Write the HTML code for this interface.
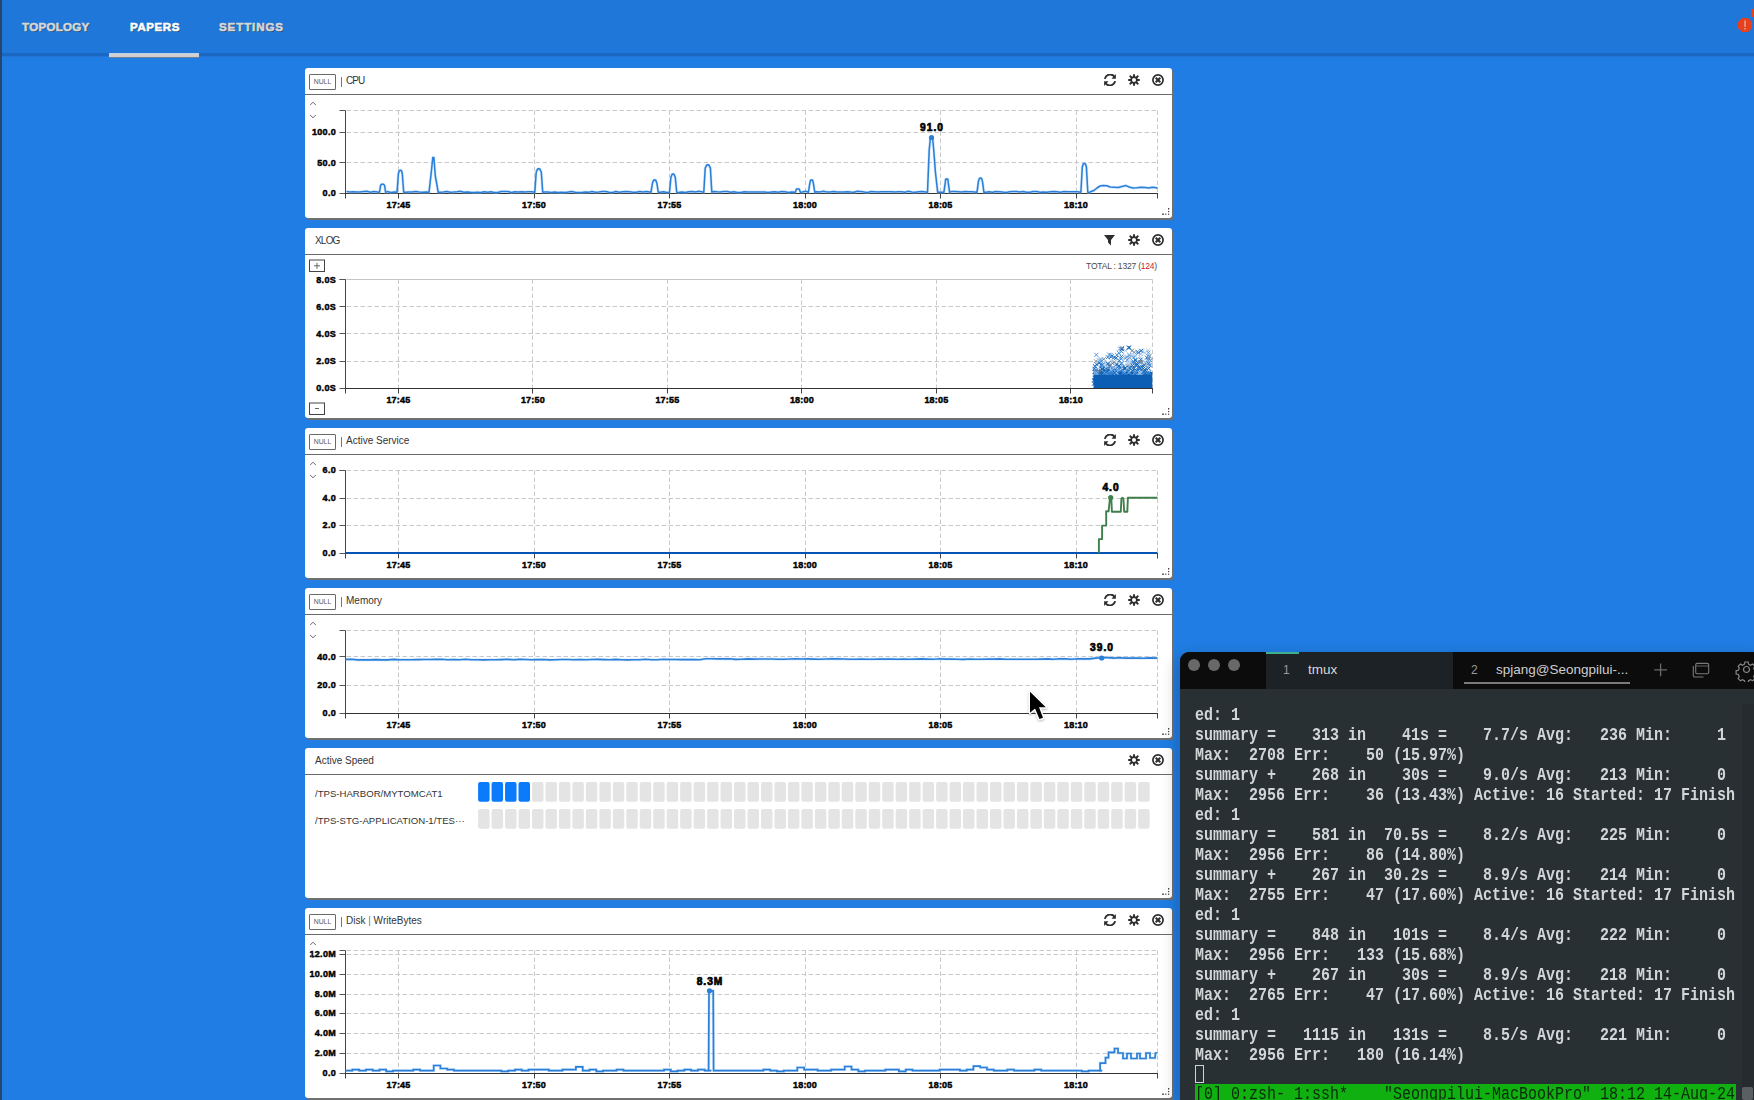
<!DOCTYPE html><html><head><meta charset="utf-8"><style>
*{margin:0;padding:0;box-sizing:border-box}
html,body{width:1754px;height:1100px;overflow:hidden;background:#207de3;font-family:"Liberation Sans",sans-serif}
#strip{position:absolute;left:0;top:0;width:2px;height:1100px;background:#26466d}
#hdr{position:absolute;left:2px;top:0;width:1752px;height:53px;background:#1e77d9}
#hdrline{position:absolute;left:2px;top:53px;width:1752px;height:4px;background:linear-gradient(#1a68c2 0,#1a68c2 75%,#2474d8 75%)}
.tab{position:absolute;top:20px;font-weight:bold;font-size:11.5px;line-height:14px;color:#d6d6d6;-webkit-text-stroke:0.6px #d6d6d6;text-shadow:1px 1px 0 rgba(40,40,40,.6)}
#tabul{position:absolute;left:109px;top:53px;width:90px;height:5px;background:linear-gradient(#bccfe4 0,#bccfe4 20%,#d2d2d2 20%,#cdcdcd 80%,#6f8196 80%)}
.panel{position:absolute;left:305px;width:867px;background:#fff;border-radius:3px;box-shadow:2px 2px 0 #707070}
.ph{position:absolute;left:0;top:0;width:100%;height:27px;border-bottom:1px solid #6b6b6b}
.null{position:absolute;left:4px;top:6px;width:27px;height:16px;border:1px solid #6a6a6a;border-radius:1px;font-size:6.8px;color:#555;text-align:center;line-height:14px}
.pt{position:absolute;left:41px;top:6.5px;font-size:10px;line-height:11px;color:#333;white-space:pre;letter-spacing:0px}
.bar{position:absolute;left:36px;top:9px;width:1px;height:9.5px;background:#777}
.pt2{position:absolute;left:10px;top:6.5px;font-size:10px;line-height:11px;color:#333;white-space:pre;letter-spacing:0px}
#term{position:absolute;left:1180px;top:652px;width:574px;height:448px;background:#293034;border-top-left-radius:9px;overflow:hidden}
#tshadow{position:absolute;left:1180px;top:660px;width:574px;height:440px;border-top-left-radius:9px;box-shadow:0 0 16px 4px rgba(0,0,0,0.2)}
#tbar{position:absolute;left:0;top:0;width:100%;height:37px;background:#0c0c0c}
.tl{position:absolute;top:7px;width:12px;height:12px;border-radius:6px;background:#686868}
#tab1{position:absolute;left:86px;top:0;width:187px;height:37px;background:#1d2226}
#tab1g{position:absolute;left:86px;top:0;width:33px;height:2px;background:#3fae8a}
.tt{position:absolute;font-family:"Liberation Sans",sans-serif;font-size:13.5px;color:#d8d8d8;white-space:pre}
.tn{position:absolute;font-family:"Liberation Sans",sans-serif;font-size:12px;color:#9a9a9a}
#tab2ul{position:absolute;left:284px;top:30px;width:166px;height:2px;background:#7a7a7a}
#tx{position:absolute;left:15px;top:52.5px;width:700px;font-family:"Liberation Mono",monospace;font-weight:bold;font-size:18px;line-height:20px;color:#d2d5d6;white-space:pre;transform-origin:0 0;transform:scaleX(0.8333)}
#status{position:absolute;left:15px;top:432px;width:541px;height:16px;background:#10b010}
#stx{position:absolute;left:15px;top:432px;width:700px;font-family:"Liberation Mono",monospace;font-size:18px;line-height:20px;color:#0b2a0b;white-space:pre;transform-origin:0 0;transform:scaleX(0.8333)}
#sb{position:absolute;left:562px;top:52px;width:12px;height:396px;background:#252b2e}
</style></head><body><div id="strip"></div><div id="hdr"></div><div id="hdrline"></div><div class="tab" style="left:22px;letter-spacing:0.33px">TOPOLOGY</div><div class="tab" style="left:130px;color:#fff;-webkit-text-stroke:0.6px #fff;letter-spacing:0.6px">PAPERS</div><div class="tab" style="left:219px;letter-spacing:0.93px">SETTINGS</div><div id="tabul"></div><svg style="position:absolute;left:1736px;top:16px" width="18" height="20"><polygon points="6,2 12,2 16,6 16,12 12,16 6,16 2,12 2,6" fill="#e8401c"/><rect x="8.3" y="4.5" width="1.5" height="6.5" fill="#d9a9a0"/><rect x="8.3" y="12" width="1.5" height="1.6" fill="#d9a9a0"/></svg><div style="position:absolute;left:1751px;top:9px;width:3px;height:8px;background:#e8401c"></div><div class="panel" style="top:68px;height:150px"><div class="ph"></div><div class="null">NULL</div><div class="bar"></div><div class="pt" style="letter-spacing:-0.9px">CPU</div><svg style="position:absolute;left:847px;top:6px" width="12" height="12"><circle cx="6" cy="6" r="5.1" fill="none" stroke="#2e2e2e" stroke-width="1.7"/><path d="M3.7 3.7 L8.3 8.3 M8.3 3.7 L3.7 8.3" stroke="#2e2e2e" stroke-width="2"/></svg><svg style="position:absolute;left:823px;top:6px" width="12" height="12"><g fill="#2e2e2e"><rect x="2.5" y="2.5" width="7" height="7"/><rect x="5" y="0.3" width="2" height="11.4"/><rect x="0.2" y="5" width="11.6" height="2"/><rect x="5.1" y="-0.1" width="1.8" height="2.4" transform="rotate(45 6 6)"/><rect x="5.1" y="-0.1" width="1.8" height="2.4" transform="rotate(135 6 6)"/><rect x="5.1" y="-0.1" width="1.8" height="2.4" transform="rotate(225 6 6)"/><rect x="5.1" y="-0.1" width="1.8" height="2.4" transform="rotate(315 6 6)"/></g><circle cx="6" cy="6" r="2.05" fill="#fff"/></svg><svg style="position:absolute;left:799px;top:6px" width="12" height="12"><path d="M0.9 4.9 A5.3 5.3 0 0 1 10.4 2.7" fill="none" stroke="#2e2e2e" stroke-width="1.9"/><polygon points="11.9,0.1 11.9,4.7 7.5,4.7" fill="#2e2e2e"/><path d="M11.1 7.1 A5.3 5.3 0 0 1 1.6 9.3" fill="none" stroke="#2e2e2e" stroke-width="1.9"/><polygon points="0.1,7.3 0.1,11.9 4.5,7.3" fill="#2e2e2e"/></svg><svg style="position:absolute;left:857px;top:140px" width="8" height="8"><g fill="#444"><rect x="6" y="0" width="1.2" height="1.6"/><rect x="6" y="3" width="1.2" height="1.2"/><rect x="6" y="5.6" width="1.2" height="1.2"/><rect x="3.2" y="5.6" width="1.2" height="1.2"/><rect x="0" y="5.6" width="2" height="1.2"/></g></svg></div><div class="panel" style="top:228px;height:190px"><div class="ph"></div><div class="pt2" style="letter-spacing:-0.8px">XLOG</div><svg style="position:absolute;left:847px;top:6px" width="12" height="12"><circle cx="6" cy="6" r="5.1" fill="none" stroke="#2e2e2e" stroke-width="1.7"/><path d="M3.7 3.7 L8.3 8.3 M8.3 3.7 L3.7 8.3" stroke="#2e2e2e" stroke-width="2"/></svg><svg style="position:absolute;left:823px;top:6px" width="12" height="12"><g fill="#2e2e2e"><rect x="2.5" y="2.5" width="7" height="7"/><rect x="5" y="0.3" width="2" height="11.4"/><rect x="0.2" y="5" width="11.6" height="2"/><rect x="5.1" y="-0.1" width="1.8" height="2.4" transform="rotate(45 6 6)"/><rect x="5.1" y="-0.1" width="1.8" height="2.4" transform="rotate(135 6 6)"/><rect x="5.1" y="-0.1" width="1.8" height="2.4" transform="rotate(225 6 6)"/><rect x="5.1" y="-0.1" width="1.8" height="2.4" transform="rotate(315 6 6)"/></g><circle cx="6" cy="6" r="2.05" fill="#fff"/></svg><svg style="position:absolute;left:799px;top:6px" width="12" height="12"><polygon points="0,1 11,1 7,6 7,11.5 4,8.5 4,6" fill="#2e2e2e"/></svg><svg style="position:absolute;left:857px;top:180px" width="8" height="8"><g fill="#444"><rect x="6" y="0" width="1.2" height="1.6"/><rect x="6" y="3" width="1.2" height="1.2"/><rect x="6" y="5.6" width="1.2" height="1.2"/><rect x="3.2" y="5.6" width="1.2" height="1.2"/><rect x="0" y="5.6" width="2" height="1.2"/></g></svg></div><div class="panel" style="top:428px;height:150px"><div class="ph"></div><div class="null">NULL</div><div class="bar"></div><div class="pt">Active Service</div><svg style="position:absolute;left:847px;top:6px" width="12" height="12"><circle cx="6" cy="6" r="5.1" fill="none" stroke="#2e2e2e" stroke-width="1.7"/><path d="M3.7 3.7 L8.3 8.3 M8.3 3.7 L3.7 8.3" stroke="#2e2e2e" stroke-width="2"/></svg><svg style="position:absolute;left:823px;top:6px" width="12" height="12"><g fill="#2e2e2e"><rect x="2.5" y="2.5" width="7" height="7"/><rect x="5" y="0.3" width="2" height="11.4"/><rect x="0.2" y="5" width="11.6" height="2"/><rect x="5.1" y="-0.1" width="1.8" height="2.4" transform="rotate(45 6 6)"/><rect x="5.1" y="-0.1" width="1.8" height="2.4" transform="rotate(135 6 6)"/><rect x="5.1" y="-0.1" width="1.8" height="2.4" transform="rotate(225 6 6)"/><rect x="5.1" y="-0.1" width="1.8" height="2.4" transform="rotate(315 6 6)"/></g><circle cx="6" cy="6" r="2.05" fill="#fff"/></svg><svg style="position:absolute;left:799px;top:6px" width="12" height="12"><path d="M0.9 4.9 A5.3 5.3 0 0 1 10.4 2.7" fill="none" stroke="#2e2e2e" stroke-width="1.9"/><polygon points="11.9,0.1 11.9,4.7 7.5,4.7" fill="#2e2e2e"/><path d="M11.1 7.1 A5.3 5.3 0 0 1 1.6 9.3" fill="none" stroke="#2e2e2e" stroke-width="1.9"/><polygon points="0.1,7.3 0.1,11.9 4.5,7.3" fill="#2e2e2e"/></svg><svg style="position:absolute;left:857px;top:140px" width="8" height="8"><g fill="#444"><rect x="6" y="0" width="1.2" height="1.6"/><rect x="6" y="3" width="1.2" height="1.2"/><rect x="6" y="5.6" width="1.2" height="1.2"/><rect x="3.2" y="5.6" width="1.2" height="1.2"/><rect x="0" y="5.6" width="2" height="1.2"/></g></svg></div><div class="panel" style="top:588px;height:150px"><div class="ph"></div><div class="null">NULL</div><div class="bar"></div><div class="pt">Memory</div><svg style="position:absolute;left:847px;top:6px" width="12" height="12"><circle cx="6" cy="6" r="5.1" fill="none" stroke="#2e2e2e" stroke-width="1.7"/><path d="M3.7 3.7 L8.3 8.3 M8.3 3.7 L3.7 8.3" stroke="#2e2e2e" stroke-width="2"/></svg><svg style="position:absolute;left:823px;top:6px" width="12" height="12"><g fill="#2e2e2e"><rect x="2.5" y="2.5" width="7" height="7"/><rect x="5" y="0.3" width="2" height="11.4"/><rect x="0.2" y="5" width="11.6" height="2"/><rect x="5.1" y="-0.1" width="1.8" height="2.4" transform="rotate(45 6 6)"/><rect x="5.1" y="-0.1" width="1.8" height="2.4" transform="rotate(135 6 6)"/><rect x="5.1" y="-0.1" width="1.8" height="2.4" transform="rotate(225 6 6)"/><rect x="5.1" y="-0.1" width="1.8" height="2.4" transform="rotate(315 6 6)"/></g><circle cx="6" cy="6" r="2.05" fill="#fff"/></svg><svg style="position:absolute;left:799px;top:6px" width="12" height="12"><path d="M0.9 4.9 A5.3 5.3 0 0 1 10.4 2.7" fill="none" stroke="#2e2e2e" stroke-width="1.9"/><polygon points="11.9,0.1 11.9,4.7 7.5,4.7" fill="#2e2e2e"/><path d="M11.1 7.1 A5.3 5.3 0 0 1 1.6 9.3" fill="none" stroke="#2e2e2e" stroke-width="1.9"/><polygon points="0.1,7.3 0.1,11.9 4.5,7.3" fill="#2e2e2e"/></svg><svg style="position:absolute;left:857px;top:140px" width="8" height="8"><g fill="#444"><rect x="6" y="0" width="1.2" height="1.6"/><rect x="6" y="3" width="1.2" height="1.2"/><rect x="6" y="5.6" width="1.2" height="1.2"/><rect x="3.2" y="5.6" width="1.2" height="1.2"/><rect x="0" y="5.6" width="2" height="1.2"/></g></svg></div><div class="panel" style="top:748px;height:150px"><div class="ph"></div><div class="pt2">Active Speed</div><svg style="position:absolute;left:847px;top:6px" width="12" height="12"><circle cx="6" cy="6" r="5.1" fill="none" stroke="#2e2e2e" stroke-width="1.7"/><path d="M3.7 3.7 L8.3 8.3 M8.3 3.7 L3.7 8.3" stroke="#2e2e2e" stroke-width="2"/></svg><svg style="position:absolute;left:823px;top:6px" width="12" height="12"><g fill="#2e2e2e"><rect x="2.5" y="2.5" width="7" height="7"/><rect x="5" y="0.3" width="2" height="11.4"/><rect x="0.2" y="5" width="11.6" height="2"/><rect x="5.1" y="-0.1" width="1.8" height="2.4" transform="rotate(45 6 6)"/><rect x="5.1" y="-0.1" width="1.8" height="2.4" transform="rotate(135 6 6)"/><rect x="5.1" y="-0.1" width="1.8" height="2.4" transform="rotate(225 6 6)"/><rect x="5.1" y="-0.1" width="1.8" height="2.4" transform="rotate(315 6 6)"/></g><circle cx="6" cy="6" r="2.05" fill="#fff"/></svg><svg style="position:absolute;left:857px;top:140px" width="8" height="8"><g fill="#444"><rect x="6" y="0" width="1.2" height="1.6"/><rect x="6" y="3" width="1.2" height="1.2"/><rect x="6" y="5.6" width="1.2" height="1.2"/><rect x="3.2" y="5.6" width="1.2" height="1.2"/><rect x="0" y="5.6" width="2" height="1.2"/></g></svg></div><div class="panel" style="top:908px;height:190px"><div class="ph"></div><div class="null">NULL</div><div class="bar"></div><div class="pt">Disk <span style="color:#777">|</span> WriteBytes</div><svg style="position:absolute;left:847px;top:6px" width="12" height="12"><circle cx="6" cy="6" r="5.1" fill="none" stroke="#2e2e2e" stroke-width="1.7"/><path d="M3.7 3.7 L8.3 8.3 M8.3 3.7 L3.7 8.3" stroke="#2e2e2e" stroke-width="2"/></svg><svg style="position:absolute;left:823px;top:6px" width="12" height="12"><g fill="#2e2e2e"><rect x="2.5" y="2.5" width="7" height="7"/><rect x="5" y="0.3" width="2" height="11.4"/><rect x="0.2" y="5" width="11.6" height="2"/><rect x="5.1" y="-0.1" width="1.8" height="2.4" transform="rotate(45 6 6)"/><rect x="5.1" y="-0.1" width="1.8" height="2.4" transform="rotate(135 6 6)"/><rect x="5.1" y="-0.1" width="1.8" height="2.4" transform="rotate(225 6 6)"/><rect x="5.1" y="-0.1" width="1.8" height="2.4" transform="rotate(315 6 6)"/></g><circle cx="6" cy="6" r="2.05" fill="#fff"/></svg><svg style="position:absolute;left:799px;top:6px" width="12" height="12"><path d="M0.9 4.9 A5.3 5.3 0 0 1 10.4 2.7" fill="none" stroke="#2e2e2e" stroke-width="1.9"/><polygon points="11.9,0.1 11.9,4.7 7.5,4.7" fill="#2e2e2e"/><path d="M11.1 7.1 A5.3 5.3 0 0 1 1.6 9.3" fill="none" stroke="#2e2e2e" stroke-width="1.9"/><polygon points="0.1,7.3 0.1,11.9 4.5,7.3" fill="#2e2e2e"/></svg><svg style="position:absolute;left:857px;top:180px" width="8" height="8"><g fill="#444"><rect x="6" y="0" width="1.2" height="1.6"/><rect x="6" y="3" width="1.2" height="1.2"/><rect x="6" y="5.6" width="1.2" height="1.2"/><rect x="3.2" y="5.6" width="1.2" height="1.2"/><rect x="0" y="5.6" width="2" height="1.2"/></g></svg></div><svg style="position:absolute;left:0;top:0" width="1754" height="1100"><style>.yl{font:bold 9px "Liberation Sans",sans-serif;fill:#000;stroke:#000;stroke-width:0.45px;letter-spacing:0.3px}.xl{font:bold 9px "Liberation Sans",sans-serif;fill:#000;stroke:#000;stroke-width:0.45px;letter-spacing:0.2px}.vl{font:bold 10.2px "Liberation Sans",sans-serif;fill:#000;stroke:#000;stroke-width:0.7px;letter-spacing:1px}</style><defs><filter id="csh" x="-50%" y="-50%" width="200%" height="200%"><feDropShadow dx="0" dy="1" stdDeviation="1" flood-opacity="0.35"/></filter></defs><line x1="346.5" y1="132.5" x2="1157.5" y2="132.5" stroke="#c8c8c8" stroke-dasharray="4.5,2.5"/><line x1="339.5" y1="132.5" x2="345.5" y2="132.5" stroke="#555"/><text x="336.0" y="135.3" class="yl" text-anchor="end">100.0</text><line x1="346.5" y1="162.5" x2="1157.5" y2="162.5" stroke="#c8c8c8" stroke-dasharray="4.5,2.5"/><line x1="339.5" y1="162.5" x2="345.5" y2="162.5" stroke="#555"/><text x="336.0" y="165.9" class="yl" text-anchor="end">50.0</text><line x1="339.5" y1="193.5" x2="345.5" y2="193.5" stroke="#555"/><text x="336.0" y="196.1" class="yl" text-anchor="end">0.0</text><line x1="346.5" y1="110.5" x2="1157.5" y2="110.5" stroke="#c8c8c8" stroke-dasharray="4.5,2.5"/><line x1="339.5" y1="110.5" x2="345.5" y2="110.5" stroke="#555"/><line x1="1157.5" y1="110.5" x2="1157.5" y2="193.5" stroke="#c8c8c8" stroke-dasharray="4.5,2.5"/><line x1="398.5" y1="110.5" x2="398.5" y2="193.5" stroke="#c8c8c8" stroke-dasharray="4.5,2.5"/><line x1="398.5" y1="193.5" x2="398.5" y2="198.5" stroke="#444"/><text x="398.5" y="207.5" class="xl" text-anchor="middle">17:45</text><line x1="534.5" y1="110.5" x2="534.5" y2="193.5" stroke="#c8c8c8" stroke-dasharray="4.5,2.5"/><line x1="534.5" y1="193.5" x2="534.5" y2="198.5" stroke="#444"/><text x="534.0" y="207.5" class="xl" text-anchor="middle">17:50</text><line x1="669.5" y1="110.5" x2="669.5" y2="193.5" stroke="#c8c8c8" stroke-dasharray="4.5,2.5"/><line x1="669.5" y1="193.5" x2="669.5" y2="198.5" stroke="#444"/><text x="669.5" y="207.5" class="xl" text-anchor="middle">17:55</text><line x1="805.5" y1="110.5" x2="805.5" y2="193.5" stroke="#c8c8c8" stroke-dasharray="4.5,2.5"/><line x1="805.5" y1="193.5" x2="805.5" y2="198.5" stroke="#444"/><text x="805.0" y="207.5" class="xl" text-anchor="middle">18:00</text><line x1="940.5" y1="110.5" x2="940.5" y2="193.5" stroke="#c8c8c8" stroke-dasharray="4.5,2.5"/><line x1="940.5" y1="193.5" x2="940.5" y2="198.5" stroke="#444"/><text x="940.5" y="207.5" class="xl" text-anchor="middle">18:05</text><line x1="1076.5" y1="110.5" x2="1076.5" y2="193.5" stroke="#c8c8c8" stroke-dasharray="4.5,2.5"/><line x1="1076.5" y1="193.5" x2="1076.5" y2="198.5" stroke="#444"/><text x="1076.0" y="207.5" class="xl" text-anchor="middle">18:10</text><line x1="345.5" y1="110.5" x2="345.5" y2="198.5" stroke="#444"/><line x1="345.0" y1="193.5" x2="1158.0" y2="193.5" stroke="#333"/><line x1="1157.5" y1="193.5" x2="1157.5" y2="198.5" stroke="#444"/><line x1="339.5" y1="279.5" x2="345.5" y2="279.5" stroke="#555"/><text x="336.0" y="282.5" class="yl" text-anchor="end">8.0S</text><line x1="346.5" y1="306.5" x2="1152.5" y2="306.5" stroke="#c8c8c8" stroke-dasharray="4.5,2.5"/><line x1="339.5" y1="306.5" x2="345.5" y2="306.5" stroke="#555"/><text x="336.0" y="309.5" class="yl" text-anchor="end">6.0S</text><line x1="346.5" y1="333.5" x2="1152.5" y2="333.5" stroke="#c8c8c8" stroke-dasharray="4.5,2.5"/><line x1="339.5" y1="333.5" x2="345.5" y2="333.5" stroke="#555"/><text x="336.0" y="336.8" class="yl" text-anchor="end">4.0S</text><line x1="346.5" y1="361.5" x2="1152.5" y2="361.5" stroke="#c8c8c8" stroke-dasharray="4.5,2.5"/><line x1="339.5" y1="361.5" x2="345.5" y2="361.5" stroke="#555"/><text x="336.0" y="364.2" class="yl" text-anchor="end">2.0S</text><line x1="339.5" y1="388.5" x2="345.5" y2="388.5" stroke="#555"/><text x="336.0" y="391.2" class="yl" text-anchor="end">0.0S</text><line x1="346.5" y1="279.5" x2="1152.5" y2="279.5" stroke="#c4c4c4"/><line x1="339.5" y1="279.5" x2="345.5" y2="279.5" stroke="#555"/><line x1="1152.5" y1="279.5" x2="1152.5" y2="388.5" stroke="#c8c8c8" stroke-dasharray="4.5,2.5"/><line x1="398.5" y1="279.5" x2="398.5" y2="388.5" stroke="#c8c8c8" stroke-dasharray="4.5,2.5"/><line x1="398.5" y1="388.5" x2="398.5" y2="393.5" stroke="#444"/><text x="398.4" y="402.5" class="xl" text-anchor="middle">17:45</text><line x1="532.5" y1="279.5" x2="532.5" y2="388.5" stroke="#c8c8c8" stroke-dasharray="4.5,2.5"/><line x1="532.5" y1="388.5" x2="532.5" y2="393.5" stroke="#444"/><text x="532.9" y="402.5" class="xl" text-anchor="middle">17:50</text><line x1="667.5" y1="279.5" x2="667.5" y2="388.5" stroke="#c8c8c8" stroke-dasharray="4.5,2.5"/><line x1="667.5" y1="388.5" x2="667.5" y2="393.5" stroke="#444"/><text x="667.4" y="402.5" class="xl" text-anchor="middle">17:55</text><line x1="801.5" y1="279.5" x2="801.5" y2="388.5" stroke="#c8c8c8" stroke-dasharray="4.5,2.5"/><line x1="801.5" y1="388.5" x2="801.5" y2="393.5" stroke="#444"/><text x="801.9" y="402.5" class="xl" text-anchor="middle">18:00</text><line x1="936.5" y1="279.5" x2="936.5" y2="388.5" stroke="#c8c8c8" stroke-dasharray="4.5,2.5"/><line x1="936.5" y1="388.5" x2="936.5" y2="393.5" stroke="#444"/><text x="936.4" y="402.5" class="xl" text-anchor="middle">18:05</text><line x1="1070.5" y1="279.5" x2="1070.5" y2="388.5" stroke="#c8c8c8" stroke-dasharray="4.5,2.5"/><line x1="1070.5" y1="388.5" x2="1070.5" y2="393.5" stroke="#444"/><text x="1070.9" y="402.5" class="xl" text-anchor="middle">18:10</text><line x1="345.5" y1="279.5" x2="345.5" y2="393.5" stroke="#444"/><line x1="345.0" y1="388.5" x2="1153.0" y2="388.5" stroke="#333"/><line x1="1152.5" y1="388.5" x2="1152.5" y2="393.5" stroke="#444"/><line x1="339.5" y1="470.5" x2="345.5" y2="470.5" stroke="#555"/><text x="336.0" y="473.2" class="yl" text-anchor="end">6.0</text><line x1="346.5" y1="498.5" x2="1157.5" y2="498.5" stroke="#c8c8c8" stroke-dasharray="4.5,2.5"/><line x1="339.5" y1="498.5" x2="345.5" y2="498.5" stroke="#555"/><text x="336.0" y="501.0" class="yl" text-anchor="end">4.0</text><line x1="346.5" y1="525.5" x2="1157.5" y2="525.5" stroke="#c8c8c8" stroke-dasharray="4.5,2.5"/><line x1="339.5" y1="525.5" x2="345.5" y2="525.5" stroke="#555"/><text x="336.0" y="528.4" class="yl" text-anchor="end">2.0</text><line x1="339.5" y1="553.5" x2="345.5" y2="553.5" stroke="#555"/><text x="336.0" y="556.0" class="yl" text-anchor="end">0.0</text><line x1="346.5" y1="470.5" x2="1157.5" y2="470.5" stroke="#c8c8c8" stroke-dasharray="4.5,2.5"/><line x1="339.5" y1="470.5" x2="345.5" y2="470.5" stroke="#555"/><line x1="1157.5" y1="470.5" x2="1157.5" y2="553.5" stroke="#c8c8c8" stroke-dasharray="4.5,2.5"/><line x1="398.5" y1="470.5" x2="398.5" y2="553.5" stroke="#c8c8c8" stroke-dasharray="4.5,2.5"/><line x1="398.5" y1="553.5" x2="398.5" y2="558.5" stroke="#444"/><text x="398.5" y="567.5" class="xl" text-anchor="middle">17:45</text><line x1="534.5" y1="470.5" x2="534.5" y2="553.5" stroke="#c8c8c8" stroke-dasharray="4.5,2.5"/><line x1="534.5" y1="553.5" x2="534.5" y2="558.5" stroke="#444"/><text x="534.0" y="567.5" class="xl" text-anchor="middle">17:50</text><line x1="669.5" y1="470.5" x2="669.5" y2="553.5" stroke="#c8c8c8" stroke-dasharray="4.5,2.5"/><line x1="669.5" y1="553.5" x2="669.5" y2="558.5" stroke="#444"/><text x="669.5" y="567.5" class="xl" text-anchor="middle">17:55</text><line x1="805.5" y1="470.5" x2="805.5" y2="553.5" stroke="#c8c8c8" stroke-dasharray="4.5,2.5"/><line x1="805.5" y1="553.5" x2="805.5" y2="558.5" stroke="#444"/><text x="805.0" y="567.5" class="xl" text-anchor="middle">18:00</text><line x1="940.5" y1="470.5" x2="940.5" y2="553.5" stroke="#c8c8c8" stroke-dasharray="4.5,2.5"/><line x1="940.5" y1="553.5" x2="940.5" y2="558.5" stroke="#444"/><text x="940.5" y="567.5" class="xl" text-anchor="middle">18:05</text><line x1="1076.5" y1="470.5" x2="1076.5" y2="553.5" stroke="#c8c8c8" stroke-dasharray="4.5,2.5"/><line x1="1076.5" y1="553.5" x2="1076.5" y2="558.5" stroke="#444"/><text x="1076.0" y="567.5" class="xl" text-anchor="middle">18:10</text><line x1="345.5" y1="470.5" x2="345.5" y2="558.5" stroke="#444"/><line x1="345.0" y1="553.5" x2="1158.0" y2="553.5" stroke="#333"/><line x1="1157.5" y1="553.5" x2="1157.5" y2="558.5" stroke="#444"/><line x1="346.5" y1="656.5" x2="1157.5" y2="656.5" stroke="#c8c8c8" stroke-dasharray="4.5,2.5"/><line x1="339.5" y1="656.5" x2="345.5" y2="656.5" stroke="#555"/><text x="336.0" y="659.5" class="yl" text-anchor="end">40.0</text><line x1="346.5" y1="685.5" x2="1157.5" y2="685.5" stroke="#c8c8c8" stroke-dasharray="4.5,2.5"/><line x1="339.5" y1="685.5" x2="345.5" y2="685.5" stroke="#555"/><text x="336.0" y="688.0" class="yl" text-anchor="end">20.0</text><line x1="339.5" y1="713.5" x2="345.5" y2="713.5" stroke="#555"/><text x="336.0" y="716.0" class="yl" text-anchor="end">0.0</text><line x1="346.5" y1="630.5" x2="1157.5" y2="630.5" stroke="#c8c8c8" stroke-dasharray="4.5,2.5"/><line x1="339.5" y1="630.5" x2="345.5" y2="630.5" stroke="#555"/><line x1="1157.5" y1="630.5" x2="1157.5" y2="713.5" stroke="#c8c8c8" stroke-dasharray="4.5,2.5"/><line x1="398.5" y1="630.5" x2="398.5" y2="713.5" stroke="#c8c8c8" stroke-dasharray="4.5,2.5"/><line x1="398.5" y1="713.5" x2="398.5" y2="718.5" stroke="#444"/><text x="398.5" y="727.5" class="xl" text-anchor="middle">17:45</text><line x1="534.5" y1="630.5" x2="534.5" y2="713.5" stroke="#c8c8c8" stroke-dasharray="4.5,2.5"/><line x1="534.5" y1="713.5" x2="534.5" y2="718.5" stroke="#444"/><text x="534.0" y="727.5" class="xl" text-anchor="middle">17:50</text><line x1="669.5" y1="630.5" x2="669.5" y2="713.5" stroke="#c8c8c8" stroke-dasharray="4.5,2.5"/><line x1="669.5" y1="713.5" x2="669.5" y2="718.5" stroke="#444"/><text x="669.5" y="727.5" class="xl" text-anchor="middle">17:55</text><line x1="805.5" y1="630.5" x2="805.5" y2="713.5" stroke="#c8c8c8" stroke-dasharray="4.5,2.5"/><line x1="805.5" y1="713.5" x2="805.5" y2="718.5" stroke="#444"/><text x="805.0" y="727.5" class="xl" text-anchor="middle">18:00</text><line x1="940.5" y1="630.5" x2="940.5" y2="713.5" stroke="#c8c8c8" stroke-dasharray="4.5,2.5"/><line x1="940.5" y1="713.5" x2="940.5" y2="718.5" stroke="#444"/><text x="940.5" y="727.5" class="xl" text-anchor="middle">18:05</text><line x1="1076.5" y1="630.5" x2="1076.5" y2="713.5" stroke="#c8c8c8" stroke-dasharray="4.5,2.5"/><line x1="1076.5" y1="713.5" x2="1076.5" y2="718.5" stroke="#444"/><text x="1076.0" y="727.5" class="xl" text-anchor="middle">18:10</text><line x1="345.5" y1="630.5" x2="345.5" y2="718.5" stroke="#444"/><line x1="345.0" y1="713.5" x2="1158.0" y2="713.5" stroke="#333"/><line x1="1157.5" y1="713.5" x2="1157.5" y2="718.5" stroke="#444"/><line x1="346.5" y1="954.5" x2="1157.5" y2="954.5" stroke="#c8c8c8" stroke-dasharray="4.5,2.5"/><line x1="339.5" y1="954.5" x2="345.5" y2="954.5" stroke="#555"/><text x="336.0" y="957.0" class="yl" text-anchor="end">12.0M</text><line x1="346.5" y1="974.5" x2="1157.5" y2="974.5" stroke="#c8c8c8" stroke-dasharray="4.5,2.5"/><line x1="339.5" y1="974.5" x2="345.5" y2="974.5" stroke="#555"/><text x="336.0" y="977.0" class="yl" text-anchor="end">10.0M</text><line x1="346.5" y1="994.5" x2="1157.5" y2="994.5" stroke="#c8c8c8" stroke-dasharray="4.5,2.5"/><line x1="339.5" y1="994.5" x2="345.5" y2="994.5" stroke="#555"/><text x="336.0" y="997.0" class="yl" text-anchor="end">8.0M</text><line x1="346.5" y1="1013.5" x2="1157.5" y2="1013.5" stroke="#c8c8c8" stroke-dasharray="4.5,2.5"/><line x1="339.5" y1="1013.5" x2="345.5" y2="1013.5" stroke="#555"/><text x="336.0" y="1016.0" class="yl" text-anchor="end">6.0M</text><line x1="346.5" y1="1033.5" x2="1157.5" y2="1033.5" stroke="#c8c8c8" stroke-dasharray="4.5,2.5"/><line x1="339.5" y1="1033.5" x2="345.5" y2="1033.5" stroke="#555"/><text x="336.0" y="1036.0" class="yl" text-anchor="end">4.0M</text><line x1="346.5" y1="1053.5" x2="1157.5" y2="1053.5" stroke="#c8c8c8" stroke-dasharray="4.5,2.5"/><line x1="339.5" y1="1053.5" x2="345.5" y2="1053.5" stroke="#555"/><text x="336.0" y="1056.0" class="yl" text-anchor="end">2.0M</text><line x1="339.5" y1="1073.5" x2="345.5" y2="1073.5" stroke="#555"/><text x="336.0" y="1076.0" class="yl" text-anchor="end">0.0</text><line x1="346.5" y1="950.5" x2="1157.5" y2="950.5" stroke="#c8c8c8" stroke-dasharray="4.5,2.5"/><line x1="339.5" y1="950.5" x2="345.5" y2="950.5" stroke="#555"/><line x1="1157.5" y1="950.5" x2="1157.5" y2="1073.5" stroke="#c8c8c8" stroke-dasharray="4.5,2.5"/><line x1="398.5" y1="950.5" x2="398.5" y2="1073.5" stroke="#c8c8c8" stroke-dasharray="4.5,2.5"/><line x1="398.5" y1="1073.5" x2="398.5" y2="1078.5" stroke="#444"/><text x="398.5" y="1087.5" class="xl" text-anchor="middle">17:45</text><line x1="534.5" y1="950.5" x2="534.5" y2="1073.5" stroke="#c8c8c8" stroke-dasharray="4.5,2.5"/><line x1="534.5" y1="1073.5" x2="534.5" y2="1078.5" stroke="#444"/><text x="534.0" y="1087.5" class="xl" text-anchor="middle">17:50</text><line x1="669.5" y1="950.5" x2="669.5" y2="1073.5" stroke="#c8c8c8" stroke-dasharray="4.5,2.5"/><line x1="669.5" y1="1073.5" x2="669.5" y2="1078.5" stroke="#444"/><text x="669.5" y="1087.5" class="xl" text-anchor="middle">17:55</text><line x1="805.5" y1="950.5" x2="805.5" y2="1073.5" stroke="#c8c8c8" stroke-dasharray="4.5,2.5"/><line x1="805.5" y1="1073.5" x2="805.5" y2="1078.5" stroke="#444"/><text x="805.0" y="1087.5" class="xl" text-anchor="middle">18:00</text><line x1="940.5" y1="950.5" x2="940.5" y2="1073.5" stroke="#c8c8c8" stroke-dasharray="4.5,2.5"/><line x1="940.5" y1="1073.5" x2="940.5" y2="1078.5" stroke="#444"/><text x="940.5" y="1087.5" class="xl" text-anchor="middle">18:05</text><line x1="1076.5" y1="950.5" x2="1076.5" y2="1073.5" stroke="#c8c8c8" stroke-dasharray="4.5,2.5"/><line x1="1076.5" y1="1073.5" x2="1076.5" y2="1078.5" stroke="#444"/><text x="1076.0" y="1087.5" class="xl" text-anchor="middle">18:10</text><line x1="345.5" y1="950.5" x2="345.5" y2="1078.5" stroke="#444"/><line x1="345.0" y1="1073.5" x2="1158.0" y2="1073.5" stroke="#333"/><line x1="1157.5" y1="1073.5" x2="1157.5" y2="1078.5" stroke="#444"/><polyline fill="none" stroke="#9fd0f8" stroke-width="3" stroke-linejoin="round" opacity="0.4" points="346.5,191.6 349.9,192.0 353.3,191.7 356.7,192.0 360.1,192.1 363.5,191.4 366.9,191.3 370.3,192.3 373.7,191.6 379.5,192.3 380.6,185.5 381.5,184.3 383.5,184.3 384.6,185.5 385.6,192.3 387.4,191.6 390.8,192.5 394.2,191.9 397.0,192.3 398.4,173.8 399.2,170.7 400.4,170.3 401.5,170.7 402.3,173.8 403.7,192.3 405.5,192.3 408.9,191.9 412.3,192.1 415.7,191.5 419.1,192.1 422.5,192.3 425.9,191.9 429.0,192.3 431.3,172.0 432.8,157.5 433.9,157.5 435.3,176.0 436.6,183.0 438.2,192.3 440.0,192.2 443.4,192.1 446.8,191.4 450.2,192.2 453.6,192.0 457.0,191.7 460.4,191.3 463.8,192.3 467.2,191.9 470.6,192.2 474.0,192.4 477.4,192.2 480.8,192.4 484.2,191.8 487.6,192.3 491.0,191.8 494.4,192.4 497.8,192.4 501.2,191.4 504.6,191.5 508.0,191.6 511.4,192.5 514.8,191.8 518.2,192.1 521.6,191.7 525.0,191.9 528.4,191.8 531.8,191.7 534.8,192.3 536.2,172.2 537.6,169.1 538.8,168.7 539.9,169.1 541.3,172.2 542.7,192.3 544.5,192.0 547.9,192.0 551.3,192.4 554.7,192.1 558.1,192.4 561.5,192.3 564.9,192.5 568.3,192.1 571.7,191.5 575.1,192.3 578.5,192.5 581.9,192.4 585.3,192.0 588.7,192.2 592.1,191.6 595.5,192.3 598.9,192.0 602.3,191.6 605.7,191.4 609.1,192.3 612.5,192.5 615.9,191.4 619.3,192.3 622.7,191.8 626.1,191.5 629.5,191.7 632.9,192.2 636.3,192.3 639.7,191.4 643.1,192.0 646.5,191.4 651.0,192.3 652.4,183.4 653.5,180.3 654.6,179.9 655.8,180.3 656.9,183.4 658.3,192.3 660.1,192.2 663.5,191.7 666.9,192.4 669.5,192.3 670.9,177.5 672.0,174.4 673.1,174.0 674.2,174.4 675.3,177.5 676.7,192.3 678.5,192.5 681.9,191.9 685.3,192.5 688.7,191.7 692.1,191.4 695.5,192.0 698.9,191.3 703.8,192.3 705.2,168.2 706.7,165.1 707.8,164.7 708.9,165.1 710.4,168.2 711.8,192.3 713.6,191.5 717.0,191.8 720.4,192.0 723.8,191.5 727.2,191.4 730.6,192.3 734.0,191.7 737.4,192.5 740.8,192.4 744.2,191.8 747.6,191.9 751.0,191.9 754.4,192.1 757.8,192.0 761.2,192.0 764.6,192.0 768.0,192.4 771.4,191.9 774.8,191.8 778.2,192.2 781.6,191.6 785.0,191.7 788.4,192.5 791.8,191.9 795.3,192.3 796.5,189.0 799.2,189.0 800.4,192.3 802.2,192.0 805.6,191.3 808.4,192.3 809.8,183.4 810.5,180.3 811.6,179.9 812.7,180.3 813.4,183.4 814.8,192.3 816.6,191.8 820.0,192.0 823.4,191.3 826.8,192.0 830.2,192.1 833.6,191.4 837.0,192.1 840.4,191.9 843.8,192.1 847.2,191.7 850.6,192.1 854.0,192.2 857.4,191.3 860.8,191.4 864.2,192.1 867.6,192.5 871.0,191.6 874.4,191.8 877.8,192.0 881.2,191.7 884.6,191.7 888.0,191.7 891.4,191.7 894.8,192.0 898.2,191.7 901.6,191.8 905.0,192.2 908.4,191.3 911.8,192.0 915.2,192.2 918.6,191.7 922.0,191.6 927.5,192.3 929.2,150.0 930.4,138.0 932.6,138.0 933.9,152.0 935.4,172.0 937.7,192.3 939.5,192.3 943.9,192.3 945.3,182.4 945.6,179.3 946.8,178.9 947.9,179.3 948.2,182.4 949.6,192.3 951.4,191.6 954.8,191.5 958.2,191.8 961.6,192.1 965.0,191.4 968.4,191.7 971.8,191.7 977.0,192.3 978.4,181.6 979.4,178.5 980.5,178.1 981.6,178.5 982.5,181.6 983.9,192.3 985.7,192.3 989.1,191.8 992.5,192.3 995.9,191.5 999.3,191.7 1002.7,192.1 1006.1,192.4 1009.5,191.8 1012.9,191.6 1016.3,191.4 1019.7,191.9 1023.1,191.5 1026.5,192.3 1029.9,192.3 1033.3,191.5 1036.7,191.6 1040.1,192.3 1043.5,192.1 1046.9,192.3 1050.3,191.7 1053.7,191.5 1057.1,191.7 1060.5,192.3 1063.9,191.6 1067.3,191.7 1070.7,191.8 1074.1,191.8 1077.5,191.8 1080.9,192.3 1082.3,167.0 1083.2,163.9 1084.3,163.5 1085.4,163.9 1086.4,167.0 1087.8,192.3 1089.6,192.4 1091.0,191.5 1094.0,190.5 1097.0,188.0 1100.0,186.0 1103.0,185.6 1107.0,185.8 1110.0,187.0 1114.0,187.3 1118.0,187.6 1122.0,186.5 1126.0,185.6 1129.0,187.0 1133.0,188.0 1137.0,187.8 1141.0,187.2 1145.0,187.5 1149.0,188.0 1152.0,187.2 1155.0,187.5 1157.5,188.3"/><polyline fill="none" stroke="#2b7fd9" stroke-width="1.55" stroke-linejoin="round" points="346.5,191.6 349.9,192.0 353.3,191.7 356.7,192.0 360.1,192.1 363.5,191.4 366.9,191.3 370.3,192.3 373.7,191.6 379.5,192.3 380.6,185.5 381.5,184.3 383.5,184.3 384.6,185.5 385.6,192.3 387.4,191.6 390.8,192.5 394.2,191.9 397.0,192.3 398.4,173.8 399.2,170.7 400.4,170.3 401.5,170.7 402.3,173.8 403.7,192.3 405.5,192.3 408.9,191.9 412.3,192.1 415.7,191.5 419.1,192.1 422.5,192.3 425.9,191.9 429.0,192.3 431.3,172.0 432.8,157.5 433.9,157.5 435.3,176.0 436.6,183.0 438.2,192.3 440.0,192.2 443.4,192.1 446.8,191.4 450.2,192.2 453.6,192.0 457.0,191.7 460.4,191.3 463.8,192.3 467.2,191.9 470.6,192.2 474.0,192.4 477.4,192.2 480.8,192.4 484.2,191.8 487.6,192.3 491.0,191.8 494.4,192.4 497.8,192.4 501.2,191.4 504.6,191.5 508.0,191.6 511.4,192.5 514.8,191.8 518.2,192.1 521.6,191.7 525.0,191.9 528.4,191.8 531.8,191.7 534.8,192.3 536.2,172.2 537.6,169.1 538.8,168.7 539.9,169.1 541.3,172.2 542.7,192.3 544.5,192.0 547.9,192.0 551.3,192.4 554.7,192.1 558.1,192.4 561.5,192.3 564.9,192.5 568.3,192.1 571.7,191.5 575.1,192.3 578.5,192.5 581.9,192.4 585.3,192.0 588.7,192.2 592.1,191.6 595.5,192.3 598.9,192.0 602.3,191.6 605.7,191.4 609.1,192.3 612.5,192.5 615.9,191.4 619.3,192.3 622.7,191.8 626.1,191.5 629.5,191.7 632.9,192.2 636.3,192.3 639.7,191.4 643.1,192.0 646.5,191.4 651.0,192.3 652.4,183.4 653.5,180.3 654.6,179.9 655.8,180.3 656.9,183.4 658.3,192.3 660.1,192.2 663.5,191.7 666.9,192.4 669.5,192.3 670.9,177.5 672.0,174.4 673.1,174.0 674.2,174.4 675.3,177.5 676.7,192.3 678.5,192.5 681.9,191.9 685.3,192.5 688.7,191.7 692.1,191.4 695.5,192.0 698.9,191.3 703.8,192.3 705.2,168.2 706.7,165.1 707.8,164.7 708.9,165.1 710.4,168.2 711.8,192.3 713.6,191.5 717.0,191.8 720.4,192.0 723.8,191.5 727.2,191.4 730.6,192.3 734.0,191.7 737.4,192.5 740.8,192.4 744.2,191.8 747.6,191.9 751.0,191.9 754.4,192.1 757.8,192.0 761.2,192.0 764.6,192.0 768.0,192.4 771.4,191.9 774.8,191.8 778.2,192.2 781.6,191.6 785.0,191.7 788.4,192.5 791.8,191.9 795.3,192.3 796.5,189.0 799.2,189.0 800.4,192.3 802.2,192.0 805.6,191.3 808.4,192.3 809.8,183.4 810.5,180.3 811.6,179.9 812.7,180.3 813.4,183.4 814.8,192.3 816.6,191.8 820.0,192.0 823.4,191.3 826.8,192.0 830.2,192.1 833.6,191.4 837.0,192.1 840.4,191.9 843.8,192.1 847.2,191.7 850.6,192.1 854.0,192.2 857.4,191.3 860.8,191.4 864.2,192.1 867.6,192.5 871.0,191.6 874.4,191.8 877.8,192.0 881.2,191.7 884.6,191.7 888.0,191.7 891.4,191.7 894.8,192.0 898.2,191.7 901.6,191.8 905.0,192.2 908.4,191.3 911.8,192.0 915.2,192.2 918.6,191.7 922.0,191.6 927.5,192.3 929.2,150.0 930.4,138.0 932.6,138.0 933.9,152.0 935.4,172.0 937.7,192.3 939.5,192.3 943.9,192.3 945.3,182.4 945.6,179.3 946.8,178.9 947.9,179.3 948.2,182.4 949.6,192.3 951.4,191.6 954.8,191.5 958.2,191.8 961.6,192.1 965.0,191.4 968.4,191.7 971.8,191.7 977.0,192.3 978.4,181.6 979.4,178.5 980.5,178.1 981.6,178.5 982.5,181.6 983.9,192.3 985.7,192.3 989.1,191.8 992.5,192.3 995.9,191.5 999.3,191.7 1002.7,192.1 1006.1,192.4 1009.5,191.8 1012.9,191.6 1016.3,191.4 1019.7,191.9 1023.1,191.5 1026.5,192.3 1029.9,192.3 1033.3,191.5 1036.7,191.6 1040.1,192.3 1043.5,192.1 1046.9,192.3 1050.3,191.7 1053.7,191.5 1057.1,191.7 1060.5,192.3 1063.9,191.6 1067.3,191.7 1070.7,191.8 1074.1,191.8 1077.5,191.8 1080.9,192.3 1082.3,167.0 1083.2,163.9 1084.3,163.5 1085.4,163.9 1086.4,167.0 1087.8,192.3 1089.6,192.4 1091.0,191.5 1094.0,190.5 1097.0,188.0 1100.0,186.0 1103.0,185.6 1107.0,185.8 1110.0,187.0 1114.0,187.3 1118.0,187.6 1122.0,186.5 1126.0,185.6 1129.0,187.0 1133.0,188.0 1137.0,187.8 1141.0,187.2 1145.0,187.5 1149.0,188.0 1152.0,187.2 1155.0,187.5 1157.5,188.3"/><circle cx="931.5" cy="137.5" r="2.6" fill="#2b7fd9"/><text x="932" y="131" class="vl" text-anchor="middle">91.0</text><line x1="345.6" y1="553" x2="1157.5" y2="553" stroke="#0753b3" stroke-width="2"/><polyline fill="none" stroke="#3f7f4c" stroke-width="1.9" stroke-linejoin="round" points="1098.9,553.0 1098.9,539.1 1102.1,539.1 1102.1,525.6 1106.2,525.6 1106.2,511.3 1108.6,511.3 1109.9,498.5 1110.5,497.5 1111.3,498.3 1111.9,511.7 1120.8,511.7 1121.4,498.5 1122.4,497.8 1123.4,498.5 1124.2,511.7 1127.3,511.7 1127.9,497.8 1157.5,497.8"/><circle cx="1110.7" cy="497.5" r="2.6" fill="#3f7f4c"/><text x="1111" y="491" class="vl" text-anchor="middle">4.0</text><polyline fill="none" stroke="#9fd0f8" stroke-width="3" opacity="0.4" points="345.6,659.4 351.6,659.3 357.6,659.9 363.6,659.8 369.6,659.9 375.6,659.6 381.6,659.9 387.6,659.9 393.6,659.4 399.6,659.7 405.6,659.8 411.6,659.7 417.6,659.6 423.6,659.5 429.6,659.5 435.6,659.4 441.6,659.3 447.6,659.7 453.6,659.5 459.6,659.8 465.6,659.3 471.6,659.8 477.6,659.7 483.6,659.9 489.6,659.8 495.6,659.8 501.6,659.6 507.6,659.3 513.6,659.7 519.6,659.4 525.6,659.5 531.6,659.7 537.6,659.6 543.6,659.5 549.6,659.9 555.6,659.7 561.6,659.5 567.6,659.5 573.6,659.8 579.6,659.6 585.6,659.8 591.6,659.5 597.6,659.4 603.6,659.6 609.6,659.8 615.6,659.4 621.6,659.8 627.6,659.9 633.6,659.8 639.6,659.8 645.6,659.3 651.6,659.7 657.6,659.8 663.6,659.3 669.6,659.5 675.6,659.5 681.6,659.6 687.6,659.6 693.6,659.6 699.6,659.8 705.6,658.8 711.6,658.8 717.6,658.9 723.6,658.9 729.6,658.8 735.6,659.4 741.6,659.3 747.6,658.9 753.6,659.1 759.6,659.0 765.6,659.0 771.6,659.0 777.6,659.2 783.6,659.2 789.6,659.0 795.6,658.9 801.6,659.0 807.6,658.9 813.6,659.1 819.6,659.2 825.6,659.0 831.6,658.8 837.6,658.9 843.6,659.0 849.6,659.2 855.6,659.3 861.6,659.0 867.6,659.3 873.6,659.2 879.6,659.1 885.6,659.0 891.6,659.1 897.6,659.2 903.6,659.1 909.6,659.2 915.6,659.1 921.6,658.9 927.6,659.1 933.6,659.2 939.6,658.8 945.6,659.1 951.6,659.1 957.6,659.3 963.6,659.4 969.6,659.0 975.6,659.3 981.6,659.3 987.6,659.0 993.6,659.1 999.6,658.9 1005.6,659.3 1011.6,659.2 1017.6,659.3 1023.6,659.3 1029.6,659.2 1035.6,659.2 1041.6,659.1 1047.6,658.9 1053.6,659.2 1059.6,658.8 1065.6,658.9 1071.6,659.3 1077.6,658.8 1083.6,658.9 1089.6,658.9 1095.6,658.1 1101.6,657.7 1107.6,657.6 1113.6,658.1 1119.6,657.7 1125.6,658.1 1131.6,658.0 1137.6,658.1 1143.6,658.2 1149.6,657.9 1155.6,658.1 1157.5,657.9"/><polyline fill="none" stroke="#2b7fd9" stroke-width="1.6" points="345.6,659.4 351.6,659.3 357.6,659.9 363.6,659.8 369.6,659.9 375.6,659.6 381.6,659.9 387.6,659.9 393.6,659.4 399.6,659.7 405.6,659.8 411.6,659.7 417.6,659.6 423.6,659.5 429.6,659.5 435.6,659.4 441.6,659.3 447.6,659.7 453.6,659.5 459.6,659.8 465.6,659.3 471.6,659.8 477.6,659.7 483.6,659.9 489.6,659.8 495.6,659.8 501.6,659.6 507.6,659.3 513.6,659.7 519.6,659.4 525.6,659.5 531.6,659.7 537.6,659.6 543.6,659.5 549.6,659.9 555.6,659.7 561.6,659.5 567.6,659.5 573.6,659.8 579.6,659.6 585.6,659.8 591.6,659.5 597.6,659.4 603.6,659.6 609.6,659.8 615.6,659.4 621.6,659.8 627.6,659.9 633.6,659.8 639.6,659.8 645.6,659.3 651.6,659.7 657.6,659.8 663.6,659.3 669.6,659.5 675.6,659.5 681.6,659.6 687.6,659.6 693.6,659.6 699.6,659.8 705.6,658.8 711.6,658.8 717.6,658.9 723.6,658.9 729.6,658.8 735.6,659.4 741.6,659.3 747.6,658.9 753.6,659.1 759.6,659.0 765.6,659.0 771.6,659.0 777.6,659.2 783.6,659.2 789.6,659.0 795.6,658.9 801.6,659.0 807.6,658.9 813.6,659.1 819.6,659.2 825.6,659.0 831.6,658.8 837.6,658.9 843.6,659.0 849.6,659.2 855.6,659.3 861.6,659.0 867.6,659.3 873.6,659.2 879.6,659.1 885.6,659.0 891.6,659.1 897.6,659.2 903.6,659.1 909.6,659.2 915.6,659.1 921.6,658.9 927.6,659.1 933.6,659.2 939.6,658.8 945.6,659.1 951.6,659.1 957.6,659.3 963.6,659.4 969.6,659.0 975.6,659.3 981.6,659.3 987.6,659.0 993.6,659.1 999.6,658.9 1005.6,659.3 1011.6,659.2 1017.6,659.3 1023.6,659.3 1029.6,659.2 1035.6,659.2 1041.6,659.1 1047.6,658.9 1053.6,659.2 1059.6,658.8 1065.6,658.9 1071.6,659.3 1077.6,658.8 1083.6,658.9 1089.6,658.9 1095.6,658.1 1101.6,657.7 1107.6,657.6 1113.6,658.1 1119.6,657.7 1125.6,658.1 1131.6,658.0 1137.6,658.1 1143.6,658.2 1149.6,657.9 1155.6,658.1 1157.5,657.9"/><circle cx="1101.7" cy="658" r="2.6" fill="#2b7fd9"/><text x="1102" y="651" class="vl" text-anchor="middle">39.0</text><polyline fill="none" stroke="#9fd0f8" stroke-width="3" opacity="0.4" points="345.6,1070.6 352.4,1070.6 352.4,1069.6 359.1,1069.6 359.1,1070.6 365.9,1070.6 365.9,1069.6 372.7,1069.6 372.7,1070.6 379.5,1070.6 379.5,1069.6 386.2,1069.6 386.2,1071.4 393.0,1071.4 393.0,1070.6 399.8,1070.6 399.8,1070.6 406.6,1070.6 406.6,1070.6 413.3,1070.6 413.3,1069.6 420.1,1069.6 420.1,1070.6 426.9,1070.6 426.9,1070.6 433.7,1070.6 433.7,1065.5 440.4,1065.5 440.4,1068.5 447.2,1068.5 447.2,1069.6 454.0,1069.6 454.0,1070.6 460.8,1070.6 460.8,1070.6 467.5,1070.6 467.5,1070.6 474.3,1070.6 474.3,1070.6 481.1,1070.6 481.1,1070.6 487.9,1070.6 487.9,1070.6 494.6,1070.6 494.6,1070.6 501.4,1070.6 501.4,1071.4 508.2,1071.4 508.2,1070.6 515.0,1070.6 515.0,1069.6 521.7,1069.6 521.7,1070.6 528.5,1070.6 528.5,1069.6 535.3,1069.6 535.3,1069.6 542.1,1069.6 542.1,1069.6 548.8,1069.6 548.8,1070.6 555.6,1070.6 555.6,1070.6 562.4,1070.6 562.4,1069.6 569.2,1069.6 569.2,1069.6 575.9,1069.6 575.9,1066.8 582.7,1066.8 582.7,1070.6 589.5,1070.6 589.5,1069.6 596.3,1069.6 596.3,1071.4 603.0,1071.4 603.0,1070.6 609.8,1070.6 609.8,1070.6 616.6,1070.6 616.6,1069.6 623.4,1069.6 623.4,1070.6 630.1,1070.6 630.1,1070.6 636.9,1070.6 636.9,1070.6 643.7,1070.6 643.7,1070.6 650.5,1070.6 650.5,1070.6 657.2,1070.6 657.2,1070.6 664.0,1070.6 664.0,1069.6 670.8,1069.6 670.8,1071.4 677.6,1071.4 677.6,1070.6 684.3,1070.6 684.3,1069.6 691.1,1069.6 691.1,1070.6 697.9,1070.6 697.9,1069.6 704.7,1069.6 704.7,1070.6 711.4,1070.6 708.6,1070.6 709.0,990.8 713.2,990.8 713.6,1070.6 716.0,1070.6 722.8,1070.6 722.8,1070.6 729.5,1070.6 729.5,1070.6 736.3,1070.6 736.3,1070.6 743.1,1070.6 743.1,1070.6 749.9,1070.6 749.9,1070.6 756.6,1070.6 756.6,1070.6 763.4,1070.6 763.4,1069.6 770.2,1069.6 770.2,1070.6 777.0,1070.6 777.0,1071.4 783.7,1071.4 783.7,1070.6 790.5,1070.6 790.5,1070.6 797.3,1070.6 797.3,1067.5 804.1,1067.5 804.1,1069.6 810.8,1069.6 810.8,1069.6 817.6,1069.6 817.6,1070.6 824.4,1070.6 824.4,1070.6 831.2,1070.6 831.2,1069.6 837.9,1069.6 837.9,1069.6 844.7,1069.6 844.7,1066.5 851.5,1066.5 851.5,1069.6 858.3,1069.6 858.3,1071.4 865.0,1071.4 865.0,1070.6 871.8,1070.6 871.8,1070.6 878.6,1070.6 878.6,1070.6 885.4,1070.6 885.4,1069.6 892.1,1069.6 892.1,1069.6 898.9,1069.6 898.9,1071.4 905.7,1071.4 905.7,1069.6 912.5,1069.6 912.5,1070.6 919.2,1070.6 919.2,1070.6 926.0,1070.6 926.0,1070.6 932.8,1070.6 932.8,1070.6 939.6,1070.6 939.6,1069.6 946.3,1069.6 946.3,1069.6 953.1,1069.6 953.1,1069.6 959.9,1069.6 959.9,1070.6 966.7,1070.6 966.7,1069.6 973.4,1069.6 973.4,1066.2 980.2,1066.2 980.2,1067.5 987.0,1067.5 987.0,1069.6 993.8,1069.6 993.8,1070.6 1000.5,1070.6 1000.5,1070.6 1007.3,1070.6 1007.3,1069.6 1014.1,1069.6 1014.1,1070.6 1020.9,1070.6 1020.9,1070.6 1027.6,1070.6 1027.6,1070.6 1034.4,1070.6 1034.4,1069.6 1041.2,1069.6 1041.2,1070.6 1048.0,1070.6 1048.0,1070.6 1054.7,1070.6 1054.7,1070.6 1061.5,1070.6 1061.5,1070.6 1068.3,1070.6 1068.3,1070.6 1075.1,1070.6 1075.1,1070.6 1081.8,1070.6 1081.8,1071.4 1088.6,1071.4 1088.6,1070.6 1095.4,1070.6 1095.4,1070.6 1102.2,1070.6 1100.1,1070.8 1100.1,1063.1 1105.5,1063.1 1105.5,1057.7 1108.5,1057.7 1108.5,1052.3 1114.5,1052.3 1114.5,1048.5 1118.0,1048.5 1118.0,1053.0 1123.0,1053.0 1123.0,1058.5 1127.0,1058.5 1127.0,1053.5 1131.0,1053.5 1131.0,1058.5 1137.0,1058.5 1137.0,1053.5 1140.0,1053.5 1140.0,1058.5 1146.0,1058.5 1146.0,1053.0 1150.0,1053.0 1150.0,1058.0 1155.0,1058.0 1155.5,1053.0 1157.5,1053.0"/><polyline fill="none" stroke="#2b7fd9" stroke-width="1.7" points="345.6,1070.6 352.4,1070.6 352.4,1069.6 359.1,1069.6 359.1,1070.6 365.9,1070.6 365.9,1069.6 372.7,1069.6 372.7,1070.6 379.5,1070.6 379.5,1069.6 386.2,1069.6 386.2,1071.4 393.0,1071.4 393.0,1070.6 399.8,1070.6 399.8,1070.6 406.6,1070.6 406.6,1070.6 413.3,1070.6 413.3,1069.6 420.1,1069.6 420.1,1070.6 426.9,1070.6 426.9,1070.6 433.7,1070.6 433.7,1065.5 440.4,1065.5 440.4,1068.5 447.2,1068.5 447.2,1069.6 454.0,1069.6 454.0,1070.6 460.8,1070.6 460.8,1070.6 467.5,1070.6 467.5,1070.6 474.3,1070.6 474.3,1070.6 481.1,1070.6 481.1,1070.6 487.9,1070.6 487.9,1070.6 494.6,1070.6 494.6,1070.6 501.4,1070.6 501.4,1071.4 508.2,1071.4 508.2,1070.6 515.0,1070.6 515.0,1069.6 521.7,1069.6 521.7,1070.6 528.5,1070.6 528.5,1069.6 535.3,1069.6 535.3,1069.6 542.1,1069.6 542.1,1069.6 548.8,1069.6 548.8,1070.6 555.6,1070.6 555.6,1070.6 562.4,1070.6 562.4,1069.6 569.2,1069.6 569.2,1069.6 575.9,1069.6 575.9,1066.8 582.7,1066.8 582.7,1070.6 589.5,1070.6 589.5,1069.6 596.3,1069.6 596.3,1071.4 603.0,1071.4 603.0,1070.6 609.8,1070.6 609.8,1070.6 616.6,1070.6 616.6,1069.6 623.4,1069.6 623.4,1070.6 630.1,1070.6 630.1,1070.6 636.9,1070.6 636.9,1070.6 643.7,1070.6 643.7,1070.6 650.5,1070.6 650.5,1070.6 657.2,1070.6 657.2,1070.6 664.0,1070.6 664.0,1069.6 670.8,1069.6 670.8,1071.4 677.6,1071.4 677.6,1070.6 684.3,1070.6 684.3,1069.6 691.1,1069.6 691.1,1070.6 697.9,1070.6 697.9,1069.6 704.7,1069.6 704.7,1070.6 711.4,1070.6 708.6,1070.6 709.0,990.8 713.2,990.8 713.6,1070.6 716.0,1070.6 722.8,1070.6 722.8,1070.6 729.5,1070.6 729.5,1070.6 736.3,1070.6 736.3,1070.6 743.1,1070.6 743.1,1070.6 749.9,1070.6 749.9,1070.6 756.6,1070.6 756.6,1070.6 763.4,1070.6 763.4,1069.6 770.2,1069.6 770.2,1070.6 777.0,1070.6 777.0,1071.4 783.7,1071.4 783.7,1070.6 790.5,1070.6 790.5,1070.6 797.3,1070.6 797.3,1067.5 804.1,1067.5 804.1,1069.6 810.8,1069.6 810.8,1069.6 817.6,1069.6 817.6,1070.6 824.4,1070.6 824.4,1070.6 831.2,1070.6 831.2,1069.6 837.9,1069.6 837.9,1069.6 844.7,1069.6 844.7,1066.5 851.5,1066.5 851.5,1069.6 858.3,1069.6 858.3,1071.4 865.0,1071.4 865.0,1070.6 871.8,1070.6 871.8,1070.6 878.6,1070.6 878.6,1070.6 885.4,1070.6 885.4,1069.6 892.1,1069.6 892.1,1069.6 898.9,1069.6 898.9,1071.4 905.7,1071.4 905.7,1069.6 912.5,1069.6 912.5,1070.6 919.2,1070.6 919.2,1070.6 926.0,1070.6 926.0,1070.6 932.8,1070.6 932.8,1070.6 939.6,1070.6 939.6,1069.6 946.3,1069.6 946.3,1069.6 953.1,1069.6 953.1,1069.6 959.9,1069.6 959.9,1070.6 966.7,1070.6 966.7,1069.6 973.4,1069.6 973.4,1066.2 980.2,1066.2 980.2,1067.5 987.0,1067.5 987.0,1069.6 993.8,1069.6 993.8,1070.6 1000.5,1070.6 1000.5,1070.6 1007.3,1070.6 1007.3,1069.6 1014.1,1069.6 1014.1,1070.6 1020.9,1070.6 1020.9,1070.6 1027.6,1070.6 1027.6,1070.6 1034.4,1070.6 1034.4,1069.6 1041.2,1069.6 1041.2,1070.6 1048.0,1070.6 1048.0,1070.6 1054.7,1070.6 1054.7,1070.6 1061.5,1070.6 1061.5,1070.6 1068.3,1070.6 1068.3,1070.6 1075.1,1070.6 1075.1,1070.6 1081.8,1070.6 1081.8,1071.4 1088.6,1071.4 1088.6,1070.6 1095.4,1070.6 1095.4,1070.6 1102.2,1070.6 1100.1,1070.8 1100.1,1063.1 1105.5,1063.1 1105.5,1057.7 1108.5,1057.7 1108.5,1052.3 1114.5,1052.3 1114.5,1048.5 1118.0,1048.5 1118.0,1053.0 1123.0,1053.0 1123.0,1058.5 1127.0,1058.5 1127.0,1053.5 1131.0,1053.5 1131.0,1058.5 1137.0,1058.5 1137.0,1053.5 1140.0,1053.5 1140.0,1058.5 1146.0,1058.5 1146.0,1053.0 1150.0,1053.0 1150.0,1058.0 1155.0,1058.0 1155.5,1053.0 1157.5,1053.0"/><circle cx="709.5" cy="990.8" r="2.6" fill="#2b7fd9"/><text x="710" y="984.5" class="vl" text-anchor="middle">8.3M</text><rect x="1093.5" y="372" width="58.8" height="16" fill="#0b5eb4"/><path d="M1126.9 379.4l4 4m0 -4l-4 4" stroke="#0b5eb4" stroke-width="1"/><path d="M1136.5 383.0l4 4m0 -4l-4 4" stroke="#0b5eb4" stroke-width="1"/><path d="M1133.4 382.6l4 4m0 -4l-4 4" stroke="#0b5eb4" stroke-width="1"/><path d="M1093.6 374.4l4 4m0 -4l-4 4" stroke="#0b5eb4" stroke-width="1"/><path d="M1144.8 377.7l4 4m0 -4l-4 4" stroke="#0b5eb4" stroke-width="1"/><path d="M1142.5 368.0l4 4m0 -4l-4 4" stroke="#0b5eb4" stroke-width="1"/><path d="M1118.3 370.4l4 4m0 -4l-4 4" stroke="#0b5eb4" stroke-width="1"/><path d="M1122.5 376.3l4 4m0 -4l-4 4" stroke="#0b5eb4" stroke-width="1"/><path d="M1092.7 369.9l4 4m0 -4l-4 4" stroke="#0b5eb4" stroke-width="1"/><path d="M1107.7 382.5l4 4m0 -4l-4 4" stroke="#0b5eb4" stroke-width="1"/><path d="M1134.9 368.9l4 4m0 -4l-4 4" stroke="#0b5eb4" stroke-width="1"/><path d="M1136.6 368.5l4 4m0 -4l-4 4" stroke="#0b5eb4" stroke-width="1"/><path d="M1126.6 368.3l4 4m0 -4l-4 4" stroke="#0b5eb4" stroke-width="1"/><path d="M1092.1 381.7l4 4m0 -4l-4 4" stroke="#0b5eb4" stroke-width="1"/><path d="M1103.7 369.9l4 4m0 -4l-4 4" stroke="#0b5eb4" stroke-width="1"/><path d="M1147.0 381.7l4 4m0 -4l-4 4" stroke="#0b5eb4" stroke-width="1"/><path d="M1108.2 383.3l4 4m0 -4l-4 4" stroke="#0b5eb4" stroke-width="1"/><path d="M1122.2 378.2l4 4m0 -4l-4 4" stroke="#0b5eb4" stroke-width="1"/><path d="M1103.5 382.9l4 4m0 -4l-4 4" stroke="#0b5eb4" stroke-width="1"/><path d="M1130.7 383.4l4 4m0 -4l-4 4" stroke="#0b5eb4" stroke-width="1"/><path d="M1142.0 371.4l4 4m0 -4l-4 4" stroke="#0b5eb4" stroke-width="1"/><path d="M1112.2 369.0l4 4m0 -4l-4 4" stroke="#0b5eb4" stroke-width="1"/><path d="M1100.2 367.2l4 4m0 -4l-4 4" stroke="#0b5eb4" stroke-width="1"/><path d="M1108.9 376.9l4 4m0 -4l-4 4" stroke="#0b5eb4" stroke-width="1"/><path d="M1092.2 378.2l4 4m0 -4l-4 4" stroke="#0b5eb4" stroke-width="1"/><path d="M1110.9 371.6l4 4m0 -4l-4 4" stroke="#0b5eb4" stroke-width="1"/><path d="M1137.8 374.7l4 4m0 -4l-4 4" stroke="#0b5eb4" stroke-width="1"/><path d="M1109.7 374.7l4 4m0 -4l-4 4" stroke="#0b5eb4" stroke-width="1"/><path d="M1131.5 367.0l4 4m0 -4l-4 4" stroke="#0b5eb4" stroke-width="1"/><path d="M1146.6 366.4l4 4m0 -4l-4 4" stroke="#0b5eb4" stroke-width="1"/><path d="M1134.0 381.2l4 4m0 -4l-4 4" stroke="#0b5eb4" stroke-width="1"/><path d="M1093.0 380.2l4 4m0 -4l-4 4" stroke="#0b5eb4" stroke-width="1"/><path d="M1112.5 376.4l4 4m0 -4l-4 4" stroke="#0b5eb4" stroke-width="1"/><path d="M1092.5 366.8l4 4m0 -4l-4 4" stroke="#0b5eb4" stroke-width="1"/><path d="M1102.1 383.2l4 4m0 -4l-4 4" stroke="#0b5eb4" stroke-width="1"/><path d="M1103.0 379.6l4 4m0 -4l-4 4" stroke="#0b5eb4" stroke-width="1"/><path d="M1144.1 383.0l4 4m0 -4l-4 4" stroke="#0b5eb4" stroke-width="1"/><path d="M1111.3 372.4l4 4m0 -4l-4 4" stroke="#0b5eb4" stroke-width="1"/><path d="M1121.4 380.0l4 4m0 -4l-4 4" stroke="#0b5eb4" stroke-width="1"/><path d="M1098.1 379.5l4 4m0 -4l-4 4" stroke="#0b5eb4" stroke-width="1"/><path d="M1136.6 381.5l4 4m0 -4l-4 4" stroke="#0b5eb4" stroke-width="1"/><path d="M1094.1 383.0l4 4m0 -4l-4 4" stroke="#0b5eb4" stroke-width="1"/><path d="M1097.1 372.1l4 4m0 -4l-4 4" stroke="#0b5eb4" stroke-width="1"/><path d="M1126.2 382.5l4 4m0 -4l-4 4" stroke="#0b5eb4" stroke-width="1"/><path d="M1111.0 382.6l4 4m0 -4l-4 4" stroke="#0b5eb4" stroke-width="1"/><path d="M1122.5 371.6l4 4m0 -4l-4 4" stroke="#0b5eb4" stroke-width="1"/><path d="M1109.7 369.2l4 4m0 -4l-4 4" stroke="#0b5eb4" stroke-width="1"/><path d="M1096.4 368.7l4 4m0 -4l-4 4" stroke="#0b5eb4" stroke-width="1"/><path d="M1130.6 383.9l4 4m0 -4l-4 4" stroke="#0b5eb4" stroke-width="1"/><path d="M1101.0 366.9l4 4m0 -4l-4 4" stroke="#0b5eb4" stroke-width="1"/><path d="M1147.3 375.6l4 4m0 -4l-4 4" stroke="#0b5eb4" stroke-width="1"/><path d="M1114.7 370.3l4 4m0 -4l-4 4" stroke="#0b5eb4" stroke-width="1"/><path d="M1125.3 380.9l4 4m0 -4l-4 4" stroke="#0b5eb4" stroke-width="1"/><path d="M1117.5 373.6l4 4m0 -4l-4 4" stroke="#0b5eb4" stroke-width="1"/><path d="M1095.1 382.5l4 4m0 -4l-4 4" stroke="#0b5eb4" stroke-width="1"/><path d="M1093.8 374.9l4 4m0 -4l-4 4" stroke="#0b5eb4" stroke-width="1"/><path d="M1139.0 368.4l4 4m0 -4l-4 4" stroke="#0b5eb4" stroke-width="1"/><path d="M1133.0 383.1l4 4m0 -4l-4 4" stroke="#0b5eb4" stroke-width="1"/><path d="M1127.3 380.2l4 4m0 -4l-4 4" stroke="#0b5eb4" stroke-width="1"/><path d="M1098.0 373.8l4 4m0 -4l-4 4" stroke="#0b5eb4" stroke-width="1"/><path d="M1100.4 381.2l4 4m0 -4l-4 4" stroke="#0b5eb4" stroke-width="1"/><path d="M1108.5 374.2l4 4m0 -4l-4 4" stroke="#0b5eb4" stroke-width="1"/><path d="M1148.0 381.3l4 4m0 -4l-4 4" stroke="#0b5eb4" stroke-width="1"/><path d="M1146.7 374.2l4 4m0 -4l-4 4" stroke="#0b5eb4" stroke-width="1"/><path d="M1119.3 379.1l4 4m0 -4l-4 4" stroke="#0b5eb4" stroke-width="1"/><path d="M1118.8 371.2l4 4m0 -4l-4 4" stroke="#0b5eb4" stroke-width="1"/><path d="M1114.6 368.6l4 4m0 -4l-4 4" stroke="#0b5eb4" stroke-width="1"/><path d="M1113.1 383.8l4 4m0 -4l-4 4" stroke="#0b5eb4" stroke-width="1"/><path d="M1145.7 377.3l4 4m0 -4l-4 4" stroke="#0b5eb4" stroke-width="1"/><path d="M1120.0 372.1l4 4m0 -4l-4 4" stroke="#0b5eb4" stroke-width="1"/><path d="M1097.0 370.9l4 4m0 -4l-4 4" stroke="#0b5eb4" stroke-width="1"/><path d="M1135.8 381.6l4 4m0 -4l-4 4" stroke="#0b5eb4" stroke-width="1"/><path d="M1112.2 380.1l4 4m0 -4l-4 4" stroke="#0b5eb4" stroke-width="1"/><path d="M1135.4 378.5l4 4m0 -4l-4 4" stroke="#0b5eb4" stroke-width="1"/><path d="M1129.2 379.7l4 4m0 -4l-4 4" stroke="#0b5eb4" stroke-width="1"/><path d="M1112.4 378.7l4 4m0 -4l-4 4" stroke="#0b5eb4" stroke-width="1"/><path d="M1107.7 374.7l4 4m0 -4l-4 4" stroke="#0b5eb4" stroke-width="1"/><path d="M1135.1 378.4l4 4m0 -4l-4 4" stroke="#0b5eb4" stroke-width="1"/><path d="M1108.5 383.0l4 4m0 -4l-4 4" stroke="#0b5eb4" stroke-width="1"/><path d="M1128.4 376.5l4 4m0 -4l-4 4" stroke="#0b5eb4" stroke-width="1"/><path d="M1092.6 375.8l4 4m0 -4l-4 4" stroke="#0b5eb4" stroke-width="1"/><path d="M1106.0 378.1l4 4m0 -4l-4 4" stroke="#0b5eb4" stroke-width="1"/><path d="M1117.9 380.7l4 4m0 -4l-4 4" stroke="#0b5eb4" stroke-width="1"/><path d="M1128.3 380.4l4 4m0 -4l-4 4" stroke="#0b5eb4" stroke-width="1"/><path d="M1111.5 377.6l4 4m0 -4l-4 4" stroke="#0b5eb4" stroke-width="1"/><path d="M1133.3 380.9l4 4m0 -4l-4 4" stroke="#0b5eb4" stroke-width="1"/><path d="M1111.6 381.2l4 4m0 -4l-4 4" stroke="#0b5eb4" stroke-width="1"/><path d="M1140.7 378.4l4 4m0 -4l-4 4" stroke="#0b5eb4" stroke-width="1"/><path d="M1146.7 383.2l4 4m0 -4l-4 4" stroke="#0b5eb4" stroke-width="1"/><path d="M1121.0 375.5l4 4m0 -4l-4 4" stroke="#0b5eb4" stroke-width="1"/><path d="M1101.8 357.2l4 4m0 -4l-4 4" stroke="#6f8196" stroke-width="0.85"/><path d="M1119.2 357.1l4 4m0 -4l-4 4" stroke="#9cc6f0" stroke-width="0.85"/><path d="M1133.4 370.0l4 4m0 -4l-4 4" stroke="#9cc6f0" stroke-width="0.85"/><path d="M1125.0 358.0l4 4m0 -4l-4 4" stroke="#3b87d9" stroke-width="0.85"/><path d="M1127.4 353.9l4 4m0 -4l-4 4" stroke="#9cc6f0" stroke-width="0.85"/><path d="M1132.8 371.0l4 4m0 -4l-4 4" stroke="#0b5eb4" stroke-width="0.85"/><path d="M1117.2 358.6l4 4m0 -4l-4 4" stroke="#0b5eb4" stroke-width="0.85"/><path d="M1130.9 360.5l4 4m0 -4l-4 4" stroke="#0b5eb4" stroke-width="0.85"/><path d="M1118.9 369.1l4 4m0 -4l-4 4" stroke="#0b5eb4" stroke-width="0.85"/><path d="M1100.0 368.6l4 4m0 -4l-4 4" stroke="#0b5eb4" stroke-width="0.85"/><path d="M1103.3 371.0l4 4m0 -4l-4 4" stroke="#3b87d9" stroke-width="0.85"/><path d="M1113.8 363.2l4 4m0 -4l-4 4" stroke="#3b87d9" stroke-width="0.85"/><path d="M1105.8 355.2l4 4m0 -4l-4 4" stroke="#0b5eb4" stroke-width="0.85"/><path d="M1115.2 368.3l4 4m0 -4l-4 4" stroke="#3b87d9" stroke-width="0.85"/><path d="M1098.9 357.4l4 4m0 -4l-4 4" stroke="#3b87d9" stroke-width="0.85"/><path d="M1094.5 362.3l4 4m0 -4l-4 4" stroke="#0b5eb4" stroke-width="0.85"/><path d="M1123.0 367.1l4 4m0 -4l-4 4" stroke="#3b87d9" stroke-width="0.85"/><path d="M1146.2 354.3l4 4m0 -4l-4 4" stroke="#3b87d9" stroke-width="0.85"/><path d="M1138.0 360.2l4 4m0 -4l-4 4" stroke="#3b87d9" stroke-width="0.85"/><path d="M1100.5 363.5l4 4m0 -4l-4 4" stroke="#3b87d9" stroke-width="0.85"/><path d="M1146.1 348.4l4 4m0 -4l-4 4" stroke="#9cc6f0" stroke-width="0.85"/><path d="M1112.2 355.5l4 4m0 -4l-4 4" stroke="#0b5eb4" stroke-width="0.85"/><path d="M1098.5 364.2l4 4m0 -4l-4 4" stroke="#9cc6f0" stroke-width="0.85"/><path d="M1100.4 362.7l4 4m0 -4l-4 4" stroke="#6f8196" stroke-width="0.85"/><path d="M1113.5 366.8l4 4m0 -4l-4 4" stroke="#0b5eb4" stroke-width="0.85"/><path d="M1108.8 352.9l4 4m0 -4l-4 4" stroke="#3b87d9" stroke-width="0.85"/><path d="M1146.3 350.6l4 4m0 -4l-4 4" stroke="#3b87d9" stroke-width="0.85"/><path d="M1107.1 352.6l4 4m0 -4l-4 4" stroke="#3b87d9" stroke-width="0.85"/><path d="M1115.8 367.5l4 4m0 -4l-4 4" stroke="#6f8196" stroke-width="0.85"/><path d="M1120.0 368.2l4 4m0 -4l-4 4" stroke="#3b87d9" stroke-width="0.85"/><path d="M1099.3 362.9l4 4m0 -4l-4 4" stroke="#3b87d9" stroke-width="0.85"/><path d="M1108.9 358.8l4 4m0 -4l-4 4" stroke="#9cc6f0" stroke-width="0.85"/><path d="M1093.2 364.2l4 4m0 -4l-4 4" stroke="#0b5eb4" stroke-width="0.85"/><path d="M1144.9 355.6l4 4m0 -4l-4 4" stroke="#0b5eb4" stroke-width="0.85"/><path d="M1107.5 370.3l4 4m0 -4l-4 4" stroke="#6f8196" stroke-width="0.85"/><path d="M1108.9 363.2l4 4m0 -4l-4 4" stroke="#3b87d9" stroke-width="0.85"/><path d="M1128.6 360.1l4 4m0 -4l-4 4" stroke="#9cc6f0" stroke-width="0.85"/><path d="M1099.1 359.4l4 4m0 -4l-4 4" stroke="#0b5eb4" stroke-width="0.85"/><path d="M1122.4 367.2l4 4m0 -4l-4 4" stroke="#0b5eb4" stroke-width="0.85"/><path d="M1122.2 364.2l4 4m0 -4l-4 4" stroke="#3b87d9" stroke-width="0.85"/><path d="M1134.2 361.7l4 4m0 -4l-4 4" stroke="#0b5eb4" stroke-width="0.85"/><path d="M1106.6 366.4l4 4m0 -4l-4 4" stroke="#6f8196" stroke-width="0.85"/><path d="M1142.2 362.9l4 4m0 -4l-4 4" stroke="#0b5eb4" stroke-width="0.85"/><path d="M1136.1 365.8l4 4m0 -4l-4 4" stroke="#3b87d9" stroke-width="0.85"/><path d="M1132.2 360.5l4 4m0 -4l-4 4" stroke="#3b87d9" stroke-width="0.85"/><path d="M1143.6 366.7l4 4m0 -4l-4 4" stroke="#3b87d9" stroke-width="0.85"/><path d="M1140.2 369.7l4 4m0 -4l-4 4" stroke="#0b5eb4" stroke-width="0.85"/><path d="M1139.0 370.8l4 4m0 -4l-4 4" stroke="#9cc6f0" stroke-width="0.85"/><path d="M1131.4 365.7l4 4m0 -4l-4 4" stroke="#0b5eb4" stroke-width="0.85"/><path d="M1136.2 350.7l4 4m0 -4l-4 4" stroke="#0b5eb4" stroke-width="0.85"/><path d="M1119.3 361.8l4 4m0 -4l-4 4" stroke="#3b87d9" stroke-width="0.85"/><path d="M1111.0 370.3l4 4m0 -4l-4 4" stroke="#3b87d9" stroke-width="0.85"/><path d="M1138.0 370.8l4 4m0 -4l-4 4" stroke="#0b5eb4" stroke-width="0.85"/><path d="M1138.4 355.2l4 4m0 -4l-4 4" stroke="#9cc6f0" stroke-width="0.85"/><path d="M1093.9 359.3l4 4m0 -4l-4 4" stroke="#6f8196" stroke-width="0.85"/><path d="M1148.4 358.3l4 4m0 -4l-4 4" stroke="#0b5eb4" stroke-width="0.85"/><path d="M1139.7 369.4l4 4m0 -4l-4 4" stroke="#9cc6f0" stroke-width="0.85"/><path d="M1145.8 358.0l4 4m0 -4l-4 4" stroke="#0b5eb4" stroke-width="0.85"/><path d="M1108.9 354.7l4 4m0 -4l-4 4" stroke="#0b5eb4" stroke-width="0.85"/><path d="M1126.7 365.5l4 4m0 -4l-4 4" stroke="#0b5eb4" stroke-width="0.85"/><path d="M1127.4 370.9l4 4m0 -4l-4 4" stroke="#0b5eb4" stroke-width="0.85"/><path d="M1113.7 370.8l4 4m0 -4l-4 4" stroke="#0b5eb4" stroke-width="0.85"/><path d="M1124.7 355.2l4 4m0 -4l-4 4" stroke="#6f8196" stroke-width="0.85"/><path d="M1100.0 366.8l4 4m0 -4l-4 4" stroke="#0b5eb4" stroke-width="0.85"/><path d="M1126.1 363.5l4 4m0 -4l-4 4" stroke="#6f8196" stroke-width="0.85"/><path d="M1113.5 370.9l4 4m0 -4l-4 4" stroke="#9cc6f0" stroke-width="0.85"/><path d="M1101.0 362.7l4 4m0 -4l-4 4" stroke="#3b87d9" stroke-width="0.85"/><path d="M1143.5 362.7l4 4m0 -4l-4 4" stroke="#9cc6f0" stroke-width="0.85"/><path d="M1107.2 364.5l4 4m0 -4l-4 4" stroke="#0b5eb4" stroke-width="0.85"/><path d="M1134.5 363.7l4 4m0 -4l-4 4" stroke="#0b5eb4" stroke-width="0.85"/><path d="M1105.6 367.8l4 4m0 -4l-4 4" stroke="#9cc6f0" stroke-width="0.85"/><path d="M1102.5 360.7l4 4m0 -4l-4 4" stroke="#9cc6f0" stroke-width="0.85"/><path d="M1097.3 360.8l4 4m0 -4l-4 4" stroke="#0b5eb4" stroke-width="0.85"/><path d="M1099.5 363.6l4 4m0 -4l-4 4" stroke="#0b5eb4" stroke-width="0.85"/><path d="M1141.6 364.6l4 4m0 -4l-4 4" stroke="#0b5eb4" stroke-width="0.85"/><path d="M1137.1 371.0l4 4m0 -4l-4 4" stroke="#9cc6f0" stroke-width="0.85"/><path d="M1095.5 370.3l4 4m0 -4l-4 4" stroke="#6f8196" stroke-width="0.85"/><path d="M1130.6 369.4l4 4m0 -4l-4 4" stroke="#0b5eb4" stroke-width="0.85"/><path d="M1147.0 359.5l4 4m0 -4l-4 4" stroke="#9cc6f0" stroke-width="0.85"/><path d="M1100.3 362.9l4 4m0 -4l-4 4" stroke="#3b87d9" stroke-width="0.85"/><path d="M1105.7 368.4l4 4m0 -4l-4 4" stroke="#9cc6f0" stroke-width="0.85"/><path d="M1112.0 367.6l4 4m0 -4l-4 4" stroke="#0b5eb4" stroke-width="0.85"/><path d="M1139.0 360.0l4 4m0 -4l-4 4" stroke="#9cc6f0" stroke-width="0.85"/><path d="M1116.8 350.8l4 4m0 -4l-4 4" stroke="#3b87d9" stroke-width="0.85"/><path d="M1125.7 361.1l4 4m0 -4l-4 4" stroke="#9cc6f0" stroke-width="0.85"/><path d="M1114.6 370.7l4 4m0 -4l-4 4" stroke="#0b5eb4" stroke-width="0.85"/><path d="M1103.8 370.9l4 4m0 -4l-4 4" stroke="#6f8196" stroke-width="0.85"/><path d="M1119.4 354.5l4 4m0 -4l-4 4" stroke="#0b5eb4" stroke-width="0.85"/><path d="M1118.8 349.1l4 4m0 -4l-4 4" stroke="#9cc6f0" stroke-width="0.85"/><path d="M1116.5 364.2l4 4m0 -4l-4 4" stroke="#0b5eb4" stroke-width="0.85"/><path d="M1101.2 370.3l4 4m0 -4l-4 4" stroke="#3b87d9" stroke-width="0.85"/><path d="M1114.1 355.9l4 4m0 -4l-4 4" stroke="#0b5eb4" stroke-width="0.85"/><path d="M1106.7 369.1l4 4m0 -4l-4 4" stroke="#0b5eb4" stroke-width="0.85"/><path d="M1108.6 369.6l4 4m0 -4l-4 4" stroke="#3b87d9" stroke-width="0.85"/><path d="M1094.3 352.8l4 4m0 -4l-4 4" stroke="#3b87d9" stroke-width="0.85"/><path d="M1145.0 358.8l4 4m0 -4l-4 4" stroke="#9cc6f0" stroke-width="0.85"/><path d="M1118.9 346.6l4 4m0 -4l-4 4" stroke="#0b5eb4" stroke-width="0.85"/><path d="M1129.9 368.4l4 4m0 -4l-4 4" stroke="#9cc6f0" stroke-width="0.85"/><path d="M1133.3 370.1l4 4m0 -4l-4 4" stroke="#0b5eb4" stroke-width="0.85"/><path d="M1093.9 369.5l4 4m0 -4l-4 4" stroke="#0b5eb4" stroke-width="0.85"/><path d="M1115.0 352.9l4 4m0 -4l-4 4" stroke="#3b87d9" stroke-width="0.85"/><path d="M1110.0 366.2l4 4m0 -4l-4 4" stroke="#0b5eb4" stroke-width="0.85"/><path d="M1133.5 357.8l4 4m0 -4l-4 4" stroke="#0b5eb4" stroke-width="0.85"/><path d="M1106.0 361.7l4 4m0 -4l-4 4" stroke="#6f8196" stroke-width="0.85"/><path d="M1128.7 365.1l4 4m0 -4l-4 4" stroke="#6f8196" stroke-width="0.85"/><path d="M1092.9 370.9l4 4m0 -4l-4 4" stroke="#9cc6f0" stroke-width="0.85"/><path d="M1115.5 370.9l4 4m0 -4l-4 4" stroke="#3b87d9" stroke-width="0.85"/><path d="M1147.9 363.6l4 4m0 -4l-4 4" stroke="#3b87d9" stroke-width="0.85"/><path d="M1097.8 370.8l4 4m0 -4l-4 4" stroke="#6f8196" stroke-width="0.85"/><path d="M1120.0 347.0l4 4m0 -4l-4 4" stroke="#0b5eb4" stroke-width="0.85"/><path d="M1106.1 370.9l4 4m0 -4l-4 4" stroke="#3b87d9" stroke-width="0.85"/><path d="M1095.9 369.2l4 4m0 -4l-4 4" stroke="#3b87d9" stroke-width="0.85"/><path d="M1109.6 370.9l4 4m0 -4l-4 4" stroke="#0b5eb4" stroke-width="0.85"/><path d="M1146.9 369.9l4 4m0 -4l-4 4" stroke="#3b87d9" stroke-width="0.85"/><path d="M1115.0 362.4l4 4m0 -4l-4 4" stroke="#0b5eb4" stroke-width="0.85"/><path d="M1110.1 370.7l4 4m0 -4l-4 4" stroke="#3b87d9" stroke-width="0.85"/><path d="M1144.1 361.5l4 4m0 -4l-4 4" stroke="#6f8196" stroke-width="0.85"/><path d="M1104.5 371.0l4 4m0 -4l-4 4" stroke="#3b87d9" stroke-width="0.85"/><path d="M1119.7 361.1l4 4m0 -4l-4 4" stroke="#3b87d9" stroke-width="0.85"/><path d="M1127.5 355.8l4 4m0 -4l-4 4" stroke="#6f8196" stroke-width="0.85"/><path d="M1109.7 366.5l4 4m0 -4l-4 4" stroke="#9cc6f0" stroke-width="0.85"/><path d="M1105.0 370.6l4 4m0 -4l-4 4" stroke="#0b5eb4" stroke-width="0.85"/><path d="M1097.4 357.8l4 4m0 -4l-4 4" stroke="#9cc6f0" stroke-width="0.85"/><path d="M1110.0 370.5l4 4m0 -4l-4 4" stroke="#0b5eb4" stroke-width="0.85"/><path d="M1106.2 370.8l4 4m0 -4l-4 4" stroke="#3b87d9" stroke-width="0.85"/><path d="M1124.8 368.8l4 4m0 -4l-4 4" stroke="#0b5eb4" stroke-width="0.85"/><path d="M1131.7 370.9l4 4m0 -4l-4 4" stroke="#0b5eb4" stroke-width="0.85"/><path d="M1108.5 367.8l4 4m0 -4l-4 4" stroke="#0b5eb4" stroke-width="0.85"/><path d="M1116.1 367.6l4 4m0 -4l-4 4" stroke="#9cc6f0" stroke-width="0.85"/><path d="M1123.6 348.8l4 4m0 -4l-4 4" stroke="#9cc6f0" stroke-width="0.85"/><path d="M1135.0 362.1l4 4m0 -4l-4 4" stroke="#3b87d9" stroke-width="0.85"/><path d="M1138.2 359.8l4 4m0 -4l-4 4" stroke="#6f8196" stroke-width="0.85"/><path d="M1133.3 358.3l4 4m0 -4l-4 4" stroke="#0b5eb4" stroke-width="0.85"/><path d="M1138.0 366.7l4 4m0 -4l-4 4" stroke="#0b5eb4" stroke-width="0.85"/><path d="M1096.2 370.1l4 4m0 -4l-4 4" stroke="#0b5eb4" stroke-width="0.85"/><path d="M1130.4 368.5l4 4m0 -4l-4 4" stroke="#0b5eb4" stroke-width="0.85"/><path d="M1135.3 362.6l4 4m0 -4l-4 4" stroke="#0b5eb4" stroke-width="0.85"/><path d="M1095.3 370.5l4 4m0 -4l-4 4" stroke="#3b87d9" stroke-width="0.85"/><path d="M1140.6 349.1l4 4m0 -4l-4 4" stroke="#9cc6f0" stroke-width="0.85"/><path d="M1105.4 366.9l4 4m0 -4l-4 4" stroke="#3b87d9" stroke-width="0.85"/><path d="M1111.0 371.0l4 4m0 -4l-4 4" stroke="#3b87d9" stroke-width="0.85"/><path d="M1138.8 357.5l4 4m0 -4l-4 4" stroke="#0b5eb4" stroke-width="0.85"/><path d="M1122.2 369.9l4 4m0 -4l-4 4" stroke="#9cc6f0" stroke-width="0.85"/><path d="M1117.5 346.9l4 4m0 -4l-4 4" stroke="#9cc6f0" stroke-width="0.85"/><path d="M1099.1 368.6l4 4m0 -4l-4 4" stroke="#6f8196" stroke-width="0.85"/><path d="M1118.3 365.0l4 4m0 -4l-4 4" stroke="#3b87d9" stroke-width="0.85"/><path d="M1135.5 349.7l4 4m0 -4l-4 4" stroke="#3b87d9" stroke-width="0.85"/><path d="M1146.8 361.5l4 4m0 -4l-4 4" stroke="#0b5eb4" stroke-width="0.85"/><path d="M1138.1 366.0l4 4m0 -4l-4 4" stroke="#0b5eb4" stroke-width="0.85"/><path d="M1147.3 370.9l4 4m0 -4l-4 4" stroke="#3b87d9" stroke-width="0.85"/><path d="M1119.5 349.5l4 4m0 -4l-4 4" stroke="#3b87d9" stroke-width="0.85"/><path d="M1104.6 369.1l4 4m0 -4l-4 4" stroke="#0b5eb4" stroke-width="0.85"/><path d="M1124.0 366.8l4 4m0 -4l-4 4" stroke="#9cc6f0" stroke-width="0.85"/><path d="M1106.0 368.1l4 4m0 -4l-4 4" stroke="#0b5eb4" stroke-width="0.85"/><path d="M1147.5 353.5l4 4m0 -4l-4 4" stroke="#9cc6f0" stroke-width="0.85"/><path d="M1127.1 365.8l4 4m0 -4l-4 4" stroke="#0b5eb4" stroke-width="0.85"/><path d="M1139.1 364.4l4 4m0 -4l-4 4" stroke="#0b5eb4" stroke-width="0.85"/><path d="M1102.0 370.7l4 4m0 -4l-4 4" stroke="#9cc6f0" stroke-width="0.85"/><path d="M1142.9 369.7l4 4m0 -4l-4 4" stroke="#9cc6f0" stroke-width="0.85"/><path d="M1110.6 361.4l4 4m0 -4l-4 4" stroke="#6f8196" stroke-width="0.85"/><path d="M1127.4 352.9l4 4m0 -4l-4 4" stroke="#3b87d9" stroke-width="0.85"/><path d="M1093.1 364.7l4 4m0 -4l-4 4" stroke="#3b87d9" stroke-width="0.85"/><path d="M1102.8 367.5l4 4m0 -4l-4 4" stroke="#0b5eb4" stroke-width="0.85"/><path d="M1094.0 368.4l4 4m0 -4l-4 4" stroke="#3b87d9" stroke-width="0.85"/><path d="M1119.2 356.7l4 4m0 -4l-4 4" stroke="#3b87d9" stroke-width="0.85"/><path d="M1147.5 354.4l4 4m0 -4l-4 4" stroke="#6f8196" stroke-width="0.85"/><path d="M1131.3 359.3l4 4m0 -4l-4 4" stroke="#3b87d9" stroke-width="0.85"/><path d="M1137.2 367.1l4 4m0 -4l-4 4" stroke="#3b87d9" stroke-width="0.85"/><path d="M1130.5 363.5l4 4m0 -4l-4 4" stroke="#0b5eb4" stroke-width="0.85"/><path d="M1096.9 370.7l4 4m0 -4l-4 4" stroke="#3b87d9" stroke-width="0.85"/><path d="M1125.0 354.5l4 4m0 -4l-4 4" stroke="#9cc6f0" stroke-width="0.85"/><path d="M1109.7 354.4l4 4m0 -4l-4 4" stroke="#0b5eb4" stroke-width="0.85"/><path d="M1132.6 370.8l4 4m0 -4l-4 4" stroke="#9cc6f0" stroke-width="0.85"/><path d="M1130.0 348.8l4 4m0 -4l-4 4" stroke="#6f8196" stroke-width="0.85"/><path d="M1131.0 353.5l4 4m0 -4l-4 4" stroke="#9cc6f0" stroke-width="0.85"/><path d="M1126.7 369.4l4 4m0 -4l-4 4" stroke="#3b87d9" stroke-width="0.85"/><path d="M1142.7 369.2l4 4m0 -4l-4 4" stroke="#6f8196" stroke-width="0.85"/><path d="M1123.0 366.0l4 4m0 -4l-4 4" stroke="#0b5eb4" stroke-width="0.85"/><path d="M1114.3 370.1l4 4m0 -4l-4 4" stroke="#9cc6f0" stroke-width="0.85"/><path d="M1142.9 350.7l4 4m0 -4l-4 4" stroke="#9cc6f0" stroke-width="0.85"/><path d="M1114.2 370.6l4 4m0 -4l-4 4" stroke="#9cc6f0" stroke-width="0.85"/><path d="M1123.5 356.2l4 4m0 -4l-4 4" stroke="#3b87d9" stroke-width="0.85"/><path d="M1142.2 369.5l4 4m0 -4l-4 4" stroke="#0b5eb4" stroke-width="0.85"/><path d="M1107.5 362.9l4 4m0 -4l-4 4" stroke="#6f8196" stroke-width="0.85"/><path d="M1101.9 362.7l4 4m0 -4l-4 4" stroke="#9cc6f0" stroke-width="0.85"/><path d="M1105.1 370.9l4 4m0 -4l-4 4" stroke="#3b87d9" stroke-width="0.85"/><path d="M1139.0 352.0l4 4m0 -4l-4 4" stroke="#9cc6f0" stroke-width="0.85"/><path d="M1115.8 365.2l4 4m0 -4l-4 4" stroke="#3b87d9" stroke-width="0.85"/><path d="M1143.2 368.2l4 4m0 -4l-4 4" stroke="#0b5eb4" stroke-width="0.85"/><path d="M1126.4 345.6l4 4m0 -4l-4 4" stroke="#0b5eb4" stroke-width="0.85"/><path d="M1094.2 370.6l4 4m0 -4l-4 4" stroke="#3b87d9" stroke-width="0.85"/><path d="M1126.3 369.7l4 4m0 -4l-4 4" stroke="#0b5eb4" stroke-width="0.85"/><path d="M1125.8 358.7l4 4m0 -4l-4 4" stroke="#9cc6f0" stroke-width="0.85"/><path d="M1133.3 370.8l4 4m0 -4l-4 4" stroke="#3b87d9" stroke-width="0.85"/><path d="M1139.2 348.8l4 4m0 -4l-4 4" stroke="#0b5eb4" stroke-width="0.85"/><path d="M1140.1 360.1l4 4m0 -4l-4 4" stroke="#6f8196" stroke-width="0.85"/><path d="M1105.3 361.1l4 4m0 -4l-4 4" stroke="#9cc6f0" stroke-width="0.85"/><path d="M1119.2 370.6l4 4m0 -4l-4 4" stroke="#0b5eb4" stroke-width="0.85"/><path d="M1101.3 370.7l4 4m0 -4l-4 4" stroke="#0b5eb4" stroke-width="0.85"/><path d="M1127.0 370.5l4 4m0 -4l-4 4" stroke="#9cc6f0" stroke-width="0.85"/><path d="M1133.7 354.3l4 4m0 -4l-4 4" stroke="#9cc6f0" stroke-width="0.85"/><path d="M1132.4 350.2l4 4m0 -4l-4 4" stroke="#6f8196" stroke-width="0.85"/><path d="M1127.5 345.7l4 4m0 -4l-4 4" stroke="#0b5eb4" stroke-width="0.85"/><path d="M1098.3 370.9l4 4m0 -4l-4 4" stroke="#0b5eb4" stroke-width="0.85"/><path d="M1113.5 366.3l4 4m0 -4l-4 4" stroke="#9cc6f0" stroke-width="0.85"/><path d="M1134.1 370.7l4 4m0 -4l-4 4" stroke="#3b87d9" stroke-width="0.85"/><path d="M1122.9 366.4l4 4m0 -4l-4 4" stroke="#0b5eb4" stroke-width="0.85"/><path d="M1125.9 366.4l4 4m0 -4l-4 4" stroke="#9cc6f0" stroke-width="0.85"/><path d="M1120.2 345.8l4 4m0 -4l-4 4" stroke="#6f8196" stroke-width="0.85"/><path d="M1096.5 358.2l4 4m0 -4l-4 4" stroke="#9cc6f0" stroke-width="0.85"/><path d="M1109.1 370.6l4 4m0 -4l-4 4" stroke="#3b87d9" stroke-width="0.85"/><path d="M1112.3 360.0l4 4m0 -4l-4 4" stroke="#6f8196" stroke-width="0.85"/><path d="M1113.9 368.9l4 4m0 -4l-4 4" stroke="#3b87d9" stroke-width="0.85"/><path d="M1131.5 355.3l4 4m0 -4l-4 4" stroke="#3b87d9" stroke-width="0.85"/><path d="M1109.1 368.3l4 4m0 -4l-4 4" stroke="#9cc6f0" stroke-width="0.85"/><path d="M1121.6 370.9l4 4m0 -4l-4 4" stroke="#3b87d9" stroke-width="0.85"/><path d="M1105.8 361.9l4 4m0 -4l-4 4" stroke="#0b5eb4" stroke-width="0.85"/><path d="M1107.7 370.7l4 4m0 -4l-4 4" stroke="#3b87d9" stroke-width="0.85"/><path d="M1147.6 363.0l4 4m0 -4l-4 4" stroke="#3b87d9" stroke-width="0.85"/><path d="M1144.8 370.7l4 4m0 -4l-4 4" stroke="#3b87d9" stroke-width="0.85"/><path d="M1137.9 371.0l4 4m0 -4l-4 4" stroke="#9cc6f0" stroke-width="0.85"/><path d="M1112.7 371.0l4 4m0 -4l-4 4" stroke="#0b5eb4" stroke-width="0.85"/><path d="M1118.2 366.2l4 4m0 -4l-4 4" stroke="#3b87d9" stroke-width="0.85"/><path d="M1095.5 369.6l4 4m0 -4l-4 4" stroke="#6f8196" stroke-width="0.85"/><path d="M1117.3 364.0l4 4m0 -4l-4 4" stroke="#0b5eb4" stroke-width="0.85"/><path d="M1108.1 353.5l4 4m0 -4l-4 4" stroke="#9cc6f0" stroke-width="0.85"/><path d="M1120.9 370.9l4 4m0 -4l-4 4" stroke="#3b87d9" stroke-width="0.85"/><path d="M1136.1 365.6l4 4m0 -4l-4 4" stroke="#3b87d9" stroke-width="0.85"/><path d="M1143.0 360.1l4 4m0 -4l-4 4" stroke="#9cc6f0" stroke-width="0.85"/><path d="M1094.5 371.0l4 4m0 -4l-4 4" stroke="#9cc6f0" stroke-width="0.85"/><path d="M310.2 105.0 L313 102.2 L315.8 105.0" fill="none" stroke="#555" stroke-width="0.9"/><path d="M310.2 115.0 L313 117.8 L315.8 115.0" fill="none" stroke="#555" stroke-width="0.9"/><path d="M310.2 465.0 L313 462.2 L315.8 465.0" fill="none" stroke="#555" stroke-width="0.9"/><path d="M310.2 475.0 L313 477.8 L315.8 475.0" fill="none" stroke="#555" stroke-width="0.9"/><path d="M310.2 625.0 L313 622.2 L315.8 625.0" fill="none" stroke="#555" stroke-width="0.9"/><path d="M310.2 635.0 L313 637.8 L315.8 635.0" fill="none" stroke="#555" stroke-width="0.9"/><path d="M310.2 945.0 L313 942.2 L315.8 945.0" fill="none" stroke="#555" stroke-width="0.9"/><path d="M310.2 955.0 L313 957.8 L315.8 955.0" fill="none" stroke="#555" stroke-width="0.9"/><rect x="309.5" y="260" width="15" height="11.5" fill="none" stroke="#444" stroke-width="1"/><path d="M314 265.8h6 M317 262.8v6" stroke="#555" stroke-width="0.9"/><rect x="309.5" y="403" width="15" height="11.5" fill="none" stroke="#444" stroke-width="1"/><path d="M315 408.5h4" stroke="#555" stroke-width="0.9"/><text x="1157" y="269.3" text-anchor="end" style="font:8.5px 'Liberation Sans',sans-serif;fill:#4a4a4a;letter-spacing:-0.2px">TOTAL : 1327 (<tspan fill="#d0202a">124</tspan>)</text><text x="315" y="796.5" style="font:9.6px 'Liberation Sans',sans-serif;fill:#333">/TPS-HARBOR/MYTOMCAT1</text><text x="315" y="823.5" style="font:9.6px 'Liberation Sans',sans-serif;fill:#333">/TPS-STG-APPLICATION-1/TES···</text><rect x="478.10" y="782" width="11.5" height="19.8" rx="2" fill="#0a7cfb"/><rect x="491.57" y="782" width="11.5" height="19.8" rx="2" fill="#0a7cfb"/><rect x="505.04" y="782" width="11.5" height="19.8" rx="2" fill="#0a7cfb"/><rect x="518.51" y="782" width="11.5" height="19.8" rx="2" fill="#0a7cfb"/><rect x="531.98" y="782" width="11.5" height="19.8" rx="2" fill="#e4e4e4"/><rect x="545.45" y="782" width="11.5" height="19.8" rx="2" fill="#e4e4e4"/><rect x="558.92" y="782" width="11.5" height="19.8" rx="2" fill="#e4e4e4"/><rect x="572.39" y="782" width="11.5" height="19.8" rx="2" fill="#e4e4e4"/><rect x="585.86" y="782" width="11.5" height="19.8" rx="2" fill="#e4e4e4"/><rect x="599.33" y="782" width="11.5" height="19.8" rx="2" fill="#e4e4e4"/><rect x="612.80" y="782" width="11.5" height="19.8" rx="2" fill="#e4e4e4"/><rect x="626.27" y="782" width="11.5" height="19.8" rx="2" fill="#e4e4e4"/><rect x="639.74" y="782" width="11.5" height="19.8" rx="2" fill="#e4e4e4"/><rect x="653.21" y="782" width="11.5" height="19.8" rx="2" fill="#e4e4e4"/><rect x="666.68" y="782" width="11.5" height="19.8" rx="2" fill="#e4e4e4"/><rect x="680.15" y="782" width="11.5" height="19.8" rx="2" fill="#e4e4e4"/><rect x="693.62" y="782" width="11.5" height="19.8" rx="2" fill="#e4e4e4"/><rect x="707.09" y="782" width="11.5" height="19.8" rx="2" fill="#e4e4e4"/><rect x="720.56" y="782" width="11.5" height="19.8" rx="2" fill="#e4e4e4"/><rect x="734.03" y="782" width="11.5" height="19.8" rx="2" fill="#e4e4e4"/><rect x="747.50" y="782" width="11.5" height="19.8" rx="2" fill="#e4e4e4"/><rect x="760.97" y="782" width="11.5" height="19.8" rx="2" fill="#e4e4e4"/><rect x="774.44" y="782" width="11.5" height="19.8" rx="2" fill="#e4e4e4"/><rect x="787.91" y="782" width="11.5" height="19.8" rx="2" fill="#e4e4e4"/><rect x="801.38" y="782" width="11.5" height="19.8" rx="2" fill="#e4e4e4"/><rect x="814.85" y="782" width="11.5" height="19.8" rx="2" fill="#e4e4e4"/><rect x="828.32" y="782" width="11.5" height="19.8" rx="2" fill="#e4e4e4"/><rect x="841.79" y="782" width="11.5" height="19.8" rx="2" fill="#e4e4e4"/><rect x="855.26" y="782" width="11.5" height="19.8" rx="2" fill="#e4e4e4"/><rect x="868.73" y="782" width="11.5" height="19.8" rx="2" fill="#e4e4e4"/><rect x="882.20" y="782" width="11.5" height="19.8" rx="2" fill="#e4e4e4"/><rect x="895.67" y="782" width="11.5" height="19.8" rx="2" fill="#e4e4e4"/><rect x="909.14" y="782" width="11.5" height="19.8" rx="2" fill="#e4e4e4"/><rect x="922.61" y="782" width="11.5" height="19.8" rx="2" fill="#e4e4e4"/><rect x="936.08" y="782" width="11.5" height="19.8" rx="2" fill="#e4e4e4"/><rect x="949.55" y="782" width="11.5" height="19.8" rx="2" fill="#e4e4e4"/><rect x="963.02" y="782" width="11.5" height="19.8" rx="2" fill="#e4e4e4"/><rect x="976.49" y="782" width="11.5" height="19.8" rx="2" fill="#e4e4e4"/><rect x="989.96" y="782" width="11.5" height="19.8" rx="2" fill="#e4e4e4"/><rect x="1003.43" y="782" width="11.5" height="19.8" rx="2" fill="#e4e4e4"/><rect x="1016.90" y="782" width="11.5" height="19.8" rx="2" fill="#e4e4e4"/><rect x="1030.37" y="782" width="11.5" height="19.8" rx="2" fill="#e4e4e4"/><rect x="1043.84" y="782" width="11.5" height="19.8" rx="2" fill="#e4e4e4"/><rect x="1057.31" y="782" width="11.5" height="19.8" rx="2" fill="#e4e4e4"/><rect x="1070.78" y="782" width="11.5" height="19.8" rx="2" fill="#e4e4e4"/><rect x="1084.25" y="782" width="11.5" height="19.8" rx="2" fill="#e4e4e4"/><rect x="1097.72" y="782" width="11.5" height="19.8" rx="2" fill="#e4e4e4"/><rect x="1111.19" y="782" width="11.5" height="19.8" rx="2" fill="#e4e4e4"/><rect x="1124.66" y="782" width="11.5" height="19.8" rx="2" fill="#e4e4e4"/><rect x="1138.13" y="782" width="11.5" height="19.8" rx="2" fill="#e4e4e4"/><rect x="478.10" y="809" width="11.5" height="19.8" rx="2" fill="#e4e4e4"/><rect x="491.57" y="809" width="11.5" height="19.8" rx="2" fill="#e4e4e4"/><rect x="505.04" y="809" width="11.5" height="19.8" rx="2" fill="#e4e4e4"/><rect x="518.51" y="809" width="11.5" height="19.8" rx="2" fill="#e4e4e4"/><rect x="531.98" y="809" width="11.5" height="19.8" rx="2" fill="#e4e4e4"/><rect x="545.45" y="809" width="11.5" height="19.8" rx="2" fill="#e4e4e4"/><rect x="558.92" y="809" width="11.5" height="19.8" rx="2" fill="#e4e4e4"/><rect x="572.39" y="809" width="11.5" height="19.8" rx="2" fill="#e4e4e4"/><rect x="585.86" y="809" width="11.5" height="19.8" rx="2" fill="#e4e4e4"/><rect x="599.33" y="809" width="11.5" height="19.8" rx="2" fill="#e4e4e4"/><rect x="612.80" y="809" width="11.5" height="19.8" rx="2" fill="#e4e4e4"/><rect x="626.27" y="809" width="11.5" height="19.8" rx="2" fill="#e4e4e4"/><rect x="639.74" y="809" width="11.5" height="19.8" rx="2" fill="#e4e4e4"/><rect x="653.21" y="809" width="11.5" height="19.8" rx="2" fill="#e4e4e4"/><rect x="666.68" y="809" width="11.5" height="19.8" rx="2" fill="#e4e4e4"/><rect x="680.15" y="809" width="11.5" height="19.8" rx="2" fill="#e4e4e4"/><rect x="693.62" y="809" width="11.5" height="19.8" rx="2" fill="#e4e4e4"/><rect x="707.09" y="809" width="11.5" height="19.8" rx="2" fill="#e4e4e4"/><rect x="720.56" y="809" width="11.5" height="19.8" rx="2" fill="#e4e4e4"/><rect x="734.03" y="809" width="11.5" height="19.8" rx="2" fill="#e4e4e4"/><rect x="747.50" y="809" width="11.5" height="19.8" rx="2" fill="#e4e4e4"/><rect x="760.97" y="809" width="11.5" height="19.8" rx="2" fill="#e4e4e4"/><rect x="774.44" y="809" width="11.5" height="19.8" rx="2" fill="#e4e4e4"/><rect x="787.91" y="809" width="11.5" height="19.8" rx="2" fill="#e4e4e4"/><rect x="801.38" y="809" width="11.5" height="19.8" rx="2" fill="#e4e4e4"/><rect x="814.85" y="809" width="11.5" height="19.8" rx="2" fill="#e4e4e4"/><rect x="828.32" y="809" width="11.5" height="19.8" rx="2" fill="#e4e4e4"/><rect x="841.79" y="809" width="11.5" height="19.8" rx="2" fill="#e4e4e4"/><rect x="855.26" y="809" width="11.5" height="19.8" rx="2" fill="#e4e4e4"/><rect x="868.73" y="809" width="11.5" height="19.8" rx="2" fill="#e4e4e4"/><rect x="882.20" y="809" width="11.5" height="19.8" rx="2" fill="#e4e4e4"/><rect x="895.67" y="809" width="11.5" height="19.8" rx="2" fill="#e4e4e4"/><rect x="909.14" y="809" width="11.5" height="19.8" rx="2" fill="#e4e4e4"/><rect x="922.61" y="809" width="11.5" height="19.8" rx="2" fill="#e4e4e4"/><rect x="936.08" y="809" width="11.5" height="19.8" rx="2" fill="#e4e4e4"/><rect x="949.55" y="809" width="11.5" height="19.8" rx="2" fill="#e4e4e4"/><rect x="963.02" y="809" width="11.5" height="19.8" rx="2" fill="#e4e4e4"/><rect x="976.49" y="809" width="11.5" height="19.8" rx="2" fill="#e4e4e4"/><rect x="989.96" y="809" width="11.5" height="19.8" rx="2" fill="#e4e4e4"/><rect x="1003.43" y="809" width="11.5" height="19.8" rx="2" fill="#e4e4e4"/><rect x="1016.90" y="809" width="11.5" height="19.8" rx="2" fill="#e4e4e4"/><rect x="1030.37" y="809" width="11.5" height="19.8" rx="2" fill="#e4e4e4"/><rect x="1043.84" y="809" width="11.5" height="19.8" rx="2" fill="#e4e4e4"/><rect x="1057.31" y="809" width="11.5" height="19.8" rx="2" fill="#e4e4e4"/><rect x="1070.78" y="809" width="11.5" height="19.8" rx="2" fill="#e4e4e4"/><rect x="1084.25" y="809" width="11.5" height="19.8" rx="2" fill="#e4e4e4"/><rect x="1097.72" y="809" width="11.5" height="19.8" rx="2" fill="#e4e4e4"/><rect x="1111.19" y="809" width="11.5" height="19.8" rx="2" fill="#e4e4e4"/><rect x="1124.66" y="809" width="11.5" height="19.8" rx="2" fill="#e4e4e4"/><rect x="1138.13" y="809" width="11.5" height="19.8" rx="2" fill="#e4e4e4"/><g filter="url(#csh)"><path d="M1030 691.8 L1030 712.8 L1035 708.5 L1039.5 719 L1043 717.8 L1039 707.3 L1045.8 707.2 Z" fill="#fff" stroke="#fff" stroke-width="2.6" stroke-linejoin="round"/></g><path d="M1030 691.8 L1030 712.8 L1035 708.5 L1039.5 719 L1043 717.8 L1039 707.3 L1045.8 707.2 Z" fill="#000"/></svg><div id="tshadow"></div><div id="term"><div id="tbar"></div><div class="tl" style="left:8px"></div><div class="tl" style="left:28px"></div><div class="tl" style="left:48px"></div><div id="tab1"></div><div id="tab1g"></div><div class="tn" style="left:103px;top:11px">1</div><div class="tt" style="left:128px;top:10px">tmux</div><div class="tn" style="left:291px;top:11px">2</div><div class="tt" style="left:316px;top:10px;color:#cfcfcf">spjang@Seongpilui-...</div><div id="tab2ul"></div><svg style="position:absolute;left:471px;top:9px" width="100" height="20"><path d="M9.6 2.4v12.8 M3.2 8.8h12.8" stroke="#6a6a6a" stroke-width="1.3"/><rect x="44.7" y="2.4" width="13" height="10.3" rx="1.5" fill="none" stroke="#7a7a7a" stroke-width="1.1"/><path d="M42.3 5v9.8a1.2 1.2 0 0 0 1.2 1.2h9" fill="none" stroke="#7a7a7a" stroke-width="1.1"/><path d="M45 5h12.5" stroke="#7a7a7a" stroke-width="0.8"/></svg><svg style="position:absolute;left:553px;top:8px" width="22" height="22"><g transform="translate(13.5,9.5)" fill="none" stroke="#888" stroke-width="1.2"><circle r="3"/><path d="M-1.6 -7.5h3.2l0.5 2.2 2 1 2-1.2 2.3 2.3-1.2 2 1 2 2.2 0.5v3.2l-2.2 0.5-1 2 1.2 2-2.3 2.3-2-1.2-2 1-0.5 2.2h-3.2l-0.5-2.2-2-1-2 1.2-2.3-2.3 1.2-2-1-2-2.2-0.5v-3.2l2.2-0.5 1-2-1.2-2 2.3-2.3 2 1.2 2-1z"/></g></svg><div id="sb"></div><div id="tx">ed: 1
summary =    313 in    41s =    7.7/s Avg:   236 Min:     1
Max:  2708 Err:    50 (15.97%)
summary +    268 in    30s =    9.0/s Avg:   213 Min:     0
Max:  2956 Err:    36 (13.43%) Active: 16 Started: 17 Finish
ed: 1
summary =    581 in  70.5s =    8.2/s Avg:   225 Min:     0
Max:  2956 Err:    86 (14.80%)
summary +    267 in  30.2s =    8.9/s Avg:   214 Min:     0
Max:  2755 Err:    47 (17.60%) Active: 16 Started: 17 Finish
ed: 1
summary =    848 in   101s =    8.4/s Avg:   222 Min:     0
Max:  2956 Err:   133 (15.68%)
summary +    267 in    30s =    8.9/s Avg:   218 Min:     0
Max:  2765 Err:    47 (17.60%) Active: 16 Started: 17 Finish
ed: 1
summary =   1115 in   131s =    8.5/s Avg:   221 Min:     0
Max:  2956 Err:   180 (16.14%)</div><div style="position:absolute;left:15px;top:413px;width:9px;height:18px;border:1px solid #cfd3d4"></div><div id="status"></div><div id="stx">[0] 0:zsh- 1:ssh*    "Seongpilui-MacBookPro" 18:12 14-Aug-24</div><div style="position:absolute;left:562px;top:435px;width:11px;height:13px;background:#5a5f62;border-radius:2px"></div></div></body></html>
